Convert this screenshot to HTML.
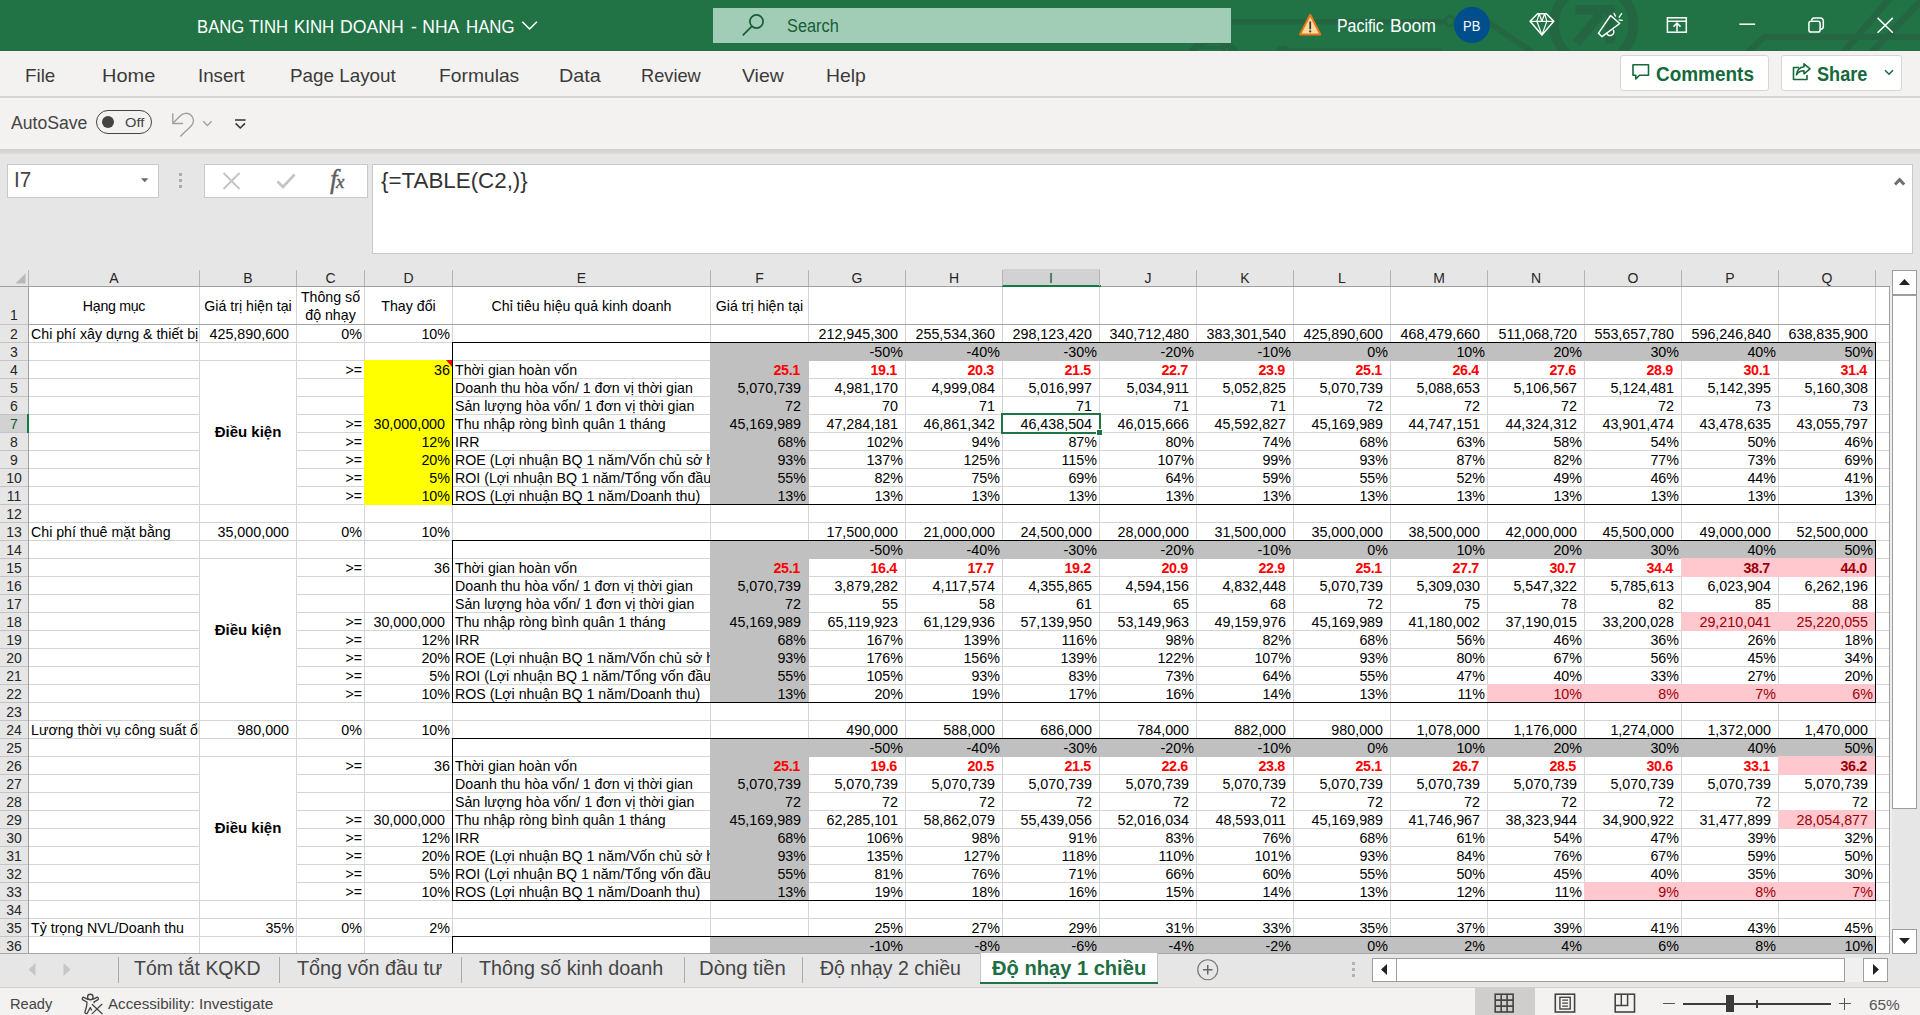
<!DOCTYPE html>
<html lang="vi"><head><meta charset="utf-8"><title>BANG TINH KINH DOANH - NHA HANG - Excel</title>
<style>
html,body{margin:0;padding:0}
body{width:1920px;height:1015px;overflow:hidden;position:relative;background:#e6e6e6;font-family:"Liberation Sans",sans-serif}
#app{position:absolute;left:0;top:0;width:1920px;height:1015px;overflow:hidden}
#app div,#app svg{position:absolute;box-sizing:content-box}
#app span{position:static}
.t{white-space:nowrap;transform-origin:0 0}
.c{font-size:14.2px;line-height:18px;color:#000;white-space:nowrap;overflow:hidden;box-sizing:border-box !important}
.h{font-size:14px}
</style></head>
<body><div id="app">
<div style="left:0px;top:0px;width:1920px;height:51px;background:#217346;"></div>
<svg style="left:1180px;top:0" width="740" height="51" viewBox="1180 0 740 51" fill="none" stroke="#236641" stroke-linecap="butt">
<circle cx="1213.5" cy="66" r="26" stroke-width="7"/>
<path d="M1199 47.5h25v6" stroke-width="3"/>
<circle cx="1593.7" cy="24.6" r="39.7" stroke-width="9.5"/>
<path d="M1575.6 9.7H1610.5V43.5" stroke-width="9.4"/>
<path d="M1601 13.5L1576.5 43" stroke-width="9"/>
<path d="M1232 21.8H1444" stroke-width="5.5"/>
<circle cx="1450" cy="21.2" r="4.7" stroke-width="3.2"/>
<path d="M1488 22l44 30" stroke-width="5.5"/>
<path d="M1290 50h152" stroke-width="3"/>
<circle cx="1283" cy="53" r="5.3" stroke-width="4.5"/>
<path d="M1746 54l18.5-17H1920" stroke-width="5.8"/>
<path d="M1842 54L1891-3" stroke-width="6.5"/>
<path d="M1870 54L1921 1" stroke-width="6.5"/>
</svg>
<div class="t " style="left:197.10px;top:19.29px;font-size:17.5px;line-height:17.5px;color:#fff;transform:scaleX(0.9534);">BANG</div>
<div class="t " style="left:248.80px;top:19.29px;font-size:17.5px;line-height:17.5px;color:#fff;transform:scaleX(0.9569);">TINH</div>
<div class="t " style="left:293.80px;top:19.29px;font-size:17.5px;line-height:17.5px;color:#fff;transform:scaleX(0.9611);">KINH</div>
<div class="t " style="left:340.10px;top:19.29px;font-size:17.5px;line-height:17.5px;color:#fff;transform:scaleX(1.0083);">DOANH</div>
<div class="t " style="left:410.50px;top:19.29px;font-size:17.5px;line-height:17.5px;color:#fff;transform:scaleX(0.9893);">-</div>
<div class="t " style="left:422.30px;top:19.29px;font-size:17.5px;line-height:17.5px;color:#fff;">NHA</div>
<div class="t " style="left:465.80px;top:19.29px;font-size:17.5px;line-height:17.5px;color:#fff;transform:scaleX(0.9609);">HANG</div>
<svg style="left:520px;top:19px" width="19" height="12" viewBox="520 19 19 12" fill="none" stroke="#fff" stroke-width="1.6"><path d="M522.3 21.8l7.3 7.2 7.3-7.2"/></svg>
<div style="left:713px;top:8px;width:518px;height:35px;background:#a1cdb6;"></div>
<svg style="left:741px;top:13px" width="25" height="24" viewBox="0 0 25 24" fill="none" stroke="#185c37" stroke-width="1.7"><circle cx="15.5" cy="8.5" r="6.6"/><path d="M10.8 13.3L1.8 22.3"/></svg>
<div class="t " style="left:786.70px;top:18.19px;font-size:17.5px;line-height:17.5px;color:#185c37;transform:scaleX(0.9338);">Search</div>
<svg style="left:1297px;top:11px" width="27" height="26" viewBox="1297 11 27 26"><path d="M1310.2 14.8L1320.3 34.4H1300.1z" fill="#fbdc9c" stroke="#e8771c" stroke-width="2" stroke-linejoin="round"/><path d="M1310.2 21.5v7.8" stroke="#3a3a3a" stroke-width="1.8"/><circle cx="1310.2" cy="31.4" r="1.1" fill="#3a3a3a"/></svg>
<div class="t " style="left:1337.10px;top:17.59px;font-size:17.5px;line-height:17.5px;color:#fff;transform:scaleX(0.9081);">Pacific</div>
<div class="t " style="left:1390.40px;top:17.59px;font-size:17.5px;line-height:17.5px;color:#fff;transform:scaleX(1.0071);">Boom</div>
<div style="left:1454px;top:7px;width:36px;height:36px;border-radius:50%;background:#004e8c"></div>
<div class="t " style="left:1463.20px;top:18.15px;font-size:15.3px;line-height:15.3px;color:#fff;transform:scaleX(0.8470);">PB</div>
<svg style="left:1528px;top:11px" width="28" height="26" viewBox="1528 11 28 26" fill="none" stroke="#fff" stroke-width="1.5" stroke-linejoin="round"><path d="M1537.5 13.7h8.9l7.4 7.6-11.9 13.6-11.8-13.6z"/><path d="M1530.1 21.3h23.7M1539.2 13.7l-2.3 7.6 5 13.6 5-13.6-2.3-7.6M1539.2 13.7l2.7 7.6 2.7-7.6" stroke-width="1.2"/></svg>
<svg style="left:1595px;top:10px" width="30" height="30" viewBox="1595 10 30 30" fill="none" stroke="#fff" stroke-width="1.5" stroke-linejoin="round" stroke-linecap="round"><path d="M1598.5 33.2L1610.6 15.5 1619.7 23.5 1602 36.7z"/><path d="M1606.8 33.6a3.5 3.5 0 0 0 6.6-3.4"/><path d="M1614 13.4l1.4 2.7M1621.6 13.6l-2.4 3.6M1622.2 20.4l-2.9-.6" stroke-width="1.3"/></svg>
<svg style="left:1664px;top:15px" width="26" height="20" viewBox="1664 15 26 20" fill="none" stroke="#fff" stroke-width="1.5"><rect x="1667.4" y="17.8" width="18.9" height="14.4"/><path d="M1667.4 21.3h18.9M1677 31.5v-8M1673.5 26.6l3.5-3.5 3.5 3.5"/></svg>
<svg style="left:1737px;top:22px" width="20" height="5" viewBox="1737 22 20 5" fill="none" stroke="#fff" stroke-width="1.5"><path d="M1739.3 24.2h15.8"/></svg>
<svg style="left:1805px;top:15px" width="22" height="20" viewBox="1805 15 22 20" fill="none" stroke="#fff" stroke-width="1.5"><rect x="1808.9" y="21.3" width="11.2" height="10.8" rx="2.2"/><path d="M1811.7 20.8v-.3a2.6 2.6 0 0 1 2.6-2.6h6a3 3 0 0 1 3 3v5.7a2.6 2.6 0 0 1-2.6 2.6h-.3"/></svg>
<svg style="left:1875px;top:15px" width="20" height="20" viewBox="1875 15 20 20" fill="none" stroke="#fff" stroke-width="1.5"><path d="M1877.6 17.9l15.2 14.8M1892.8 17.9l-15.2 14.8"/></svg>
<div style="left:0px;top:51px;width:1920px;height:46px;background:#f3f2f1;"></div>
<div style="left:0px;top:96px;width:1920px;height:2px;background:#d6d4d2;"></div>
<div class="t " style="left:24.70px;top:66.12px;font-size:19px;line-height:19px;color:#3b3a39;transform:scaleX(0.9905);">File</div>
<div class="t " style="left:101.70px;top:66.12px;font-size:19px;line-height:19px;color:#3b3a39;transform:scaleX(1.0507);">Home</div>
<div class="t " style="left:198.20px;top:66.12px;font-size:19px;line-height:19px;color:#3b3a39;transform:scaleX(0.9853);">Insert</div>
<div class="t " style="left:289.70px;top:66.12px;font-size:19px;line-height:19px;color:#3b3a39;transform:scaleX(0.9917);">Page Layout</div>
<div class="t " style="left:438.70px;top:66.12px;font-size:19px;line-height:19px;color:#3b3a39;transform:scaleX(1.0135);">Formulas</div>
<div class="t " style="left:559.20px;top:66.12px;font-size:19px;line-height:19px;color:#3b3a39;transform:scaleX(1.0402);">Data</div>
<div class="t " style="left:641.20px;top:66.12px;font-size:19px;line-height:19px;color:#3b3a39;transform:scaleX(0.9596);">Review</div>
<div class="t " style="left:742.20px;top:66.12px;font-size:19px;line-height:19px;color:#3b3a39;transform:scaleX(1.0233);">View</div>
<div class="t " style="left:826.20px;top:66.12px;font-size:19px;line-height:19px;color:#3b3a39;transform:scaleX(1.0193);">Help</div>
<div style="left:1620px;top:55px;width:147px;height:34px;background:#fff;border:1px solid #d8d6d4;border-radius:3px"></div>
<div style="left:1781px;top:55px;width:119px;height:34px;background:#fff;border:1px solid #d8d6d4;border-radius:3px"></div>
<svg style="left:1631px;top:63px" width="20" height="19" viewBox="0 0 20 19" fill="none" stroke="#15693b" stroke-width="1.6" stroke-linejoin="round"><path d="M2 1.8h15.5v10.5H8.5L4.8 16v-3.7H2z"/></svg>
<div class="t " style="left:1656.20px;top:65.21px;font-size:19.6px;line-height:19.6px;color:#15693b;font-weight:bold;transform:scaleX(0.9671);">Comments</div>
<svg style="left:1791px;top:62px" width="21" height="20" viewBox="0 0 21 20" fill="none" stroke="#15693b" stroke-width="1.6" stroke-linejoin="round"><path d="M8 5.5H2.5v12h13.5v-4.5"/><path d="M13 1.8l6 5-6 5v-3c-4 0-6 1.5-7.5 4 .5-5 3-7.5 7.5-8z"/></svg>
<div class="t " style="left:1816.60px;top:65.21px;font-size:19.6px;line-height:19.6px;color:#15693b;font-weight:bold;transform:scaleX(0.9250);">Share</div>
<svg style="left:1884px;top:69px" width="10" height="7" viewBox="0 0 10 7" fill="none" stroke="#15693b" stroke-width="1.5"><path d="M1 1.2l4 4 4-4"/></svg>
<div style="left:0px;top:98px;width:1920px;height:51px;background:#f3f2f1;"></div>
<div style="left:0;top:149px;width:1920px;height:7px;background:linear-gradient(#cdcdcd,#e6e6e6)"></div>
<div class="t " style="left:10.70px;top:113.56px;font-size:18px;line-height:18px;color:#444;transform:scaleX(0.9778);">AutoSave</div>
<div style="left:96px;top:110px;width:54.4px;height:21.6px;border:1.3px solid #444;border-radius:13px"></div>
<div style="left:102px;top:116px;width:12px;height:12px;border-radius:50%;background:#444"></div>
<div class="t " style="left:124.60px;top:116.29px;font-size:13.6px;line-height:13.6px;color:#444;transform:scaleX(1.0807);">Off</div>
<svg style="left:170px;top:110px" width="26" height="28" viewBox="170 110 26 28" fill="none" stroke="#a19f9d" stroke-width="1.4" stroke-linecap="butt" stroke-linejoin="miter"><path d="M172.8 113.2v10.3h10.3"/><path d="M173.2 123.1l6.3-6.6c3.3-3.6 8.3-4.3 11.6-1.3 3 2.8 3.2 7.4.3 10.5L180.3 136.4"/></svg>
<svg style="left:202px;top:120px" width="11" height="7" viewBox="202 120 11 7" fill="none" stroke="#a19f9d" stroke-width="1.3"><path d="M203.2 121.3l4.2 4.2 4.2-4.2"/></svg>
<svg style="left:234px;top:118px" width="13" height="12" viewBox="234 118 13 12" fill="none" stroke="#333" stroke-width="1.5"><path d="M235 120h10.6M235.6 123.4l4.7 4.6 4.7-4.6"/></svg>
<div style="left:0px;top:154px;width:1920px;height:115px;background:#e6e6e6;"></div>
<div style="left:7px;top:164px;width:150px;height:32px;background:#fff;border:1px solid #c8c8c8"></div>
<div class="t " style="left:14.00px;top:169.15px;font-size:21.8px;line-height:21.8px;color:#444;transform:scaleX(0.9449);">I7</div>
<svg style="left:141px;top:178px" width="8" height="5" viewBox="0 0 8 5"><path d="M0 0.3h7.4L3.7 4.2z" fill="#6a6a6a"/></svg>
<div style="left:179px;top:173px;width:3px;height:3px;background:#ababab;"></div>
<div style="left:179px;top:179px;width:3px;height:3px;background:#ababab;"></div>
<div style="left:179px;top:185px;width:3px;height:3px;background:#ababab;"></div>
<div style="left:204px;top:164px;width:162px;height:32px;background:#fff;border:1px solid #c8c8c8"></div>
<svg style="left:222px;top:172px" width="20" height="18" viewBox="0 0 20 18" fill="none" stroke="#c3c3c3" stroke-width="1.8"><path d="M1.5 1l16 16M17.5 1l-16 16"/></svg>
<svg style="left:276px;top:173px" width="20" height="16" viewBox="0 0 20 16" fill="none" stroke="#c3c3c3" stroke-width="2.6"><path d="M1.5 8.5l5.5 5.5L18.5 1.5"/></svg>
<div class="t" style="left:330px;top:166px;font-size:27px;line-height:27px;color:#5e5e5e;font-family:'Liberation Serif',serif;font-style:italic;letter-spacing:-1.5px;-webkit-text-stroke:0.4px #5e5e5e">f<span style="font-size:19px">x</span></div>
<div style="left:372px;top:164px;width:1539px;height:88px;background:#fff;border:1px solid #c8c8c8"></div>
<div class="t " style="left:381.20px;top:170.18px;font-size:22px;line-height:22px;color:#333;transform:scaleX(1.0156);">{=TABLE(C2,)}</div>
<svg style="left:1892px;top:175px" width="15" height="12" viewBox="1892 175 15 12" fill="none" stroke="#6e6e6e" stroke-width="3"><path d="M1895 184.5l4.6-4.8 4.6 4.8"/></svg>
<div style="left:0px;top:269px;width:1890px;height:685px;background:#fff;"></div>
<div style="left:0px;top:269px;width:1890px;height:17px;background:#e6e6e6;"></div>
<div style="left:0px;top:269px;width:28px;height:684px;background:#e6e6e6;"></div>
<div style="left:199px;top:287px;width:1px;height:666px;background:#d4d4d4;"></div>
<div style="left:296px;top:287px;width:1px;height:666px;background:#d4d4d4;"></div>
<div style="left:364px;top:287px;width:1px;height:666px;background:#d4d4d4;"></div>
<div style="left:452px;top:287px;width:1px;height:666px;background:#d4d4d4;"></div>
<div style="left:710px;top:287px;width:1px;height:666px;background:#d4d4d4;"></div>
<div style="left:808px;top:287px;width:1px;height:666px;background:#d4d4d4;"></div>
<div style="left:905px;top:287px;width:1px;height:666px;background:#d4d4d4;"></div>
<div style="left:1002px;top:287px;width:1px;height:666px;background:#d4d4d4;"></div>
<div style="left:1099px;top:287px;width:1px;height:666px;background:#d4d4d4;"></div>
<div style="left:1196px;top:287px;width:1px;height:666px;background:#d4d4d4;"></div>
<div style="left:1293px;top:287px;width:1px;height:666px;background:#d4d4d4;"></div>
<div style="left:1390px;top:287px;width:1px;height:666px;background:#d4d4d4;"></div>
<div style="left:1487px;top:287px;width:1px;height:666px;background:#d4d4d4;"></div>
<div style="left:1584px;top:287px;width:1px;height:666px;background:#d4d4d4;"></div>
<div style="left:1681px;top:287px;width:1px;height:666px;background:#d4d4d4;"></div>
<div style="left:1778px;top:287px;width:1px;height:666px;background:#d4d4d4;"></div>
<div style="left:1875px;top:287px;width:1px;height:666px;background:#d4d4d4;"></div>
<div style="left:29px;top:324px;width:1860px;height:1px;background:#a3a3a3;"></div>
<div style="left:29px;top:342px;width:1860px;height:1px;background:#d4d4d4;"></div>
<div style="left:29px;top:360px;width:1860px;height:1px;background:#d4d4d4;"></div>
<div style="left:29px;top:378px;width:1860px;height:1px;background:#d4d4d4;"></div>
<div style="left:29px;top:396px;width:1860px;height:1px;background:#d4d4d4;"></div>
<div style="left:29px;top:414px;width:1860px;height:1px;background:#d4d4d4;"></div>
<div style="left:29px;top:432px;width:1860px;height:1px;background:#d4d4d4;"></div>
<div style="left:29px;top:450px;width:1860px;height:1px;background:#d4d4d4;"></div>
<div style="left:29px;top:468px;width:1860px;height:1px;background:#d4d4d4;"></div>
<div style="left:29px;top:486px;width:1860px;height:1px;background:#d4d4d4;"></div>
<div style="left:29px;top:504px;width:1860px;height:1px;background:#d4d4d4;"></div>
<div style="left:29px;top:522px;width:1860px;height:1px;background:#d4d4d4;"></div>
<div style="left:29px;top:540px;width:1860px;height:1px;background:#d4d4d4;"></div>
<div style="left:29px;top:558px;width:1860px;height:1px;background:#d4d4d4;"></div>
<div style="left:29px;top:576px;width:1860px;height:1px;background:#d4d4d4;"></div>
<div style="left:29px;top:594px;width:1860px;height:1px;background:#d4d4d4;"></div>
<div style="left:29px;top:612px;width:1860px;height:1px;background:#d4d4d4;"></div>
<div style="left:29px;top:630px;width:1860px;height:1px;background:#d4d4d4;"></div>
<div style="left:29px;top:648px;width:1860px;height:1px;background:#d4d4d4;"></div>
<div style="left:29px;top:666px;width:1860px;height:1px;background:#d4d4d4;"></div>
<div style="left:29px;top:684px;width:1860px;height:1px;background:#d4d4d4;"></div>
<div style="left:29px;top:702px;width:1860px;height:1px;background:#d4d4d4;"></div>
<div style="left:29px;top:720px;width:1860px;height:1px;background:#d4d4d4;"></div>
<div style="left:29px;top:738px;width:1860px;height:1px;background:#d4d4d4;"></div>
<div style="left:29px;top:756px;width:1860px;height:1px;background:#d4d4d4;"></div>
<div style="left:29px;top:774px;width:1860px;height:1px;background:#d4d4d4;"></div>
<div style="left:29px;top:792px;width:1860px;height:1px;background:#d4d4d4;"></div>
<div style="left:29px;top:810px;width:1860px;height:1px;background:#d4d4d4;"></div>
<div style="left:29px;top:828px;width:1860px;height:1px;background:#d4d4d4;"></div>
<div style="left:29px;top:846px;width:1860px;height:1px;background:#d4d4d4;"></div>
<div style="left:29px;top:864px;width:1860px;height:1px;background:#d4d4d4;"></div>
<div style="left:29px;top:882px;width:1860px;height:1px;background:#d4d4d4;"></div>
<div style="left:29px;top:900px;width:1860px;height:1px;background:#d4d4d4;"></div>
<div style="left:29px;top:918px;width:1860px;height:1px;background:#d4d4d4;"></div>
<div style="left:29px;top:936px;width:1860px;height:1px;background:#d4d4d4;"></div>
<div style="left:200px;top:361px;width:96px;height:143px;background:#fff;"></div>
<div style="left:364px;top:360px;width:89px;height:145px;background:#ffff00;"></div>
<div style="left:710px;top:342px;width:1166px;height:19px;background:#c0c0c0;"></div>
<div style="left:710px;top:360px;width:99px;height:145px;background:#c0c0c0;"></div>
<div style="left:200px;top:559px;width:96px;height:143px;background:#fff;"></div>
<div style="left:710px;top:540px;width:1166px;height:19px;background:#c0c0c0;"></div>
<div style="left:710px;top:558px;width:99px;height:145px;background:#c0c0c0;"></div>
<div style="left:1681px;top:558px;width:98px;height:19px;background:#ffc7ce;"></div>
<div style="left:1778px;top:558px;width:98px;height:19px;background:#ffc7ce;"></div>
<div style="left:1681px;top:612px;width:98px;height:19px;background:#ffc7ce;"></div>
<div style="left:1778px;top:612px;width:98px;height:19px;background:#ffc7ce;"></div>
<div style="left:1487px;top:684px;width:98px;height:19px;background:#ffc7ce;"></div>
<div style="left:1584px;top:684px;width:98px;height:19px;background:#ffc7ce;"></div>
<div style="left:1681px;top:684px;width:98px;height:19px;background:#ffc7ce;"></div>
<div style="left:1778px;top:684px;width:98px;height:19px;background:#ffc7ce;"></div>
<div style="left:200px;top:757px;width:96px;height:143px;background:#fff;"></div>
<div style="left:710px;top:738px;width:1166px;height:19px;background:#c0c0c0;"></div>
<div style="left:710px;top:756px;width:99px;height:145px;background:#c0c0c0;"></div>
<div style="left:1778px;top:756px;width:98px;height:19px;background:#ffc7ce;"></div>
<div style="left:1778px;top:810px;width:98px;height:19px;background:#ffc7ce;"></div>
<div style="left:1584px;top:882px;width:98px;height:19px;background:#ffc7ce;"></div>
<div style="left:1681px;top:882px;width:98px;height:19px;background:#ffc7ce;"></div>
<div style="left:1778px;top:882px;width:98px;height:19px;background:#ffc7ce;"></div>
<div style="left:710px;top:936px;width:1166px;height:17px;background:#c0c0c0;"></div>
<div style="left:452px;top:342px;width:1422px;height:161px;border:1px solid #000"></div>
<div style="left:452px;top:540px;width:1422px;height:161px;border:1px solid #000"></div>
<div style="left:452px;top:738px;width:1422px;height:161px;border:1px solid #000"></div>
<div style="left:452px;top:936px;width:1422px;height:17px;border:1px solid #000;border-bottom:none"></div>
<svg style="left:446px;top:360px" width="6" height="7" viewBox="0 0 6 7"><path d="M0 0h6v7z" fill="#ff0000"/></svg>
<div class="c" style="left:29px;top:287px;width:170px;height:37px;line-height:38px;text-align:center;letter-spacing:-0.3px">Hạng mục</div>
<div class="c" style="left:200px;top:287px;width:96px;height:37px;line-height:38px;text-align:center;letter-spacing:0px">Giá trị hiện tại</div>
<div class="c" style="left:297px;top:289px;width:67px;height:36px;line-height:17.6px;text-align:center;white-space:normal">Thông số<br>độ nhạy</div>
<div class="c" style="left:365px;top:287px;width:87px;height:37px;line-height:38px;text-align:center;letter-spacing:0px">Thay đổi</div>
<div class="c" style="left:453px;top:287px;width:257px;height:37px;line-height:38px;text-align:center;letter-spacing:0px">Chỉ tiêu hiệu quả kinh doanh</div>
<div class="c" style="left:711px;top:287px;width:97px;height:37px;line-height:38px;text-align:center;letter-spacing:0px">Giá trị hiện tại</div>
<div class="c" style="left:29px;top:325px;width:170px;height:18px;padding-left:2px;">Chi phí xây dựng &amp; thiết bị</div>
<div class="c" style="left:200px;top:325px;width:96px;height:18px;text-align:right;padding-right:7px;font-size:14.3px;">425,890,600</div>
<div class="c" style="left:297px;top:325px;width:67px;height:18px;text-align:right;padding-right:2px;font-size:14.3px;">0%</div>
<div class="c" style="left:365px;top:325px;width:87px;height:18px;text-align:right;padding-right:2px;font-size:14.3px;">10%</div>
<div class="c" style="left:809px;top:325px;width:96px;height:18px;text-align:right;padding-right:7px;font-size:14.3px;">212,945,300</div>
<div class="c" style="left:906px;top:325px;width:96px;height:18px;text-align:right;padding-right:7px;font-size:14.3px;">255,534,360</div>
<div class="c" style="left:1003px;top:325px;width:96px;height:18px;text-align:right;padding-right:7px;font-size:14.3px;">298,123,420</div>
<div class="c" style="left:1100px;top:325px;width:96px;height:18px;text-align:right;padding-right:7px;font-size:14.3px;">340,712,480</div>
<div class="c" style="left:1197px;top:325px;width:96px;height:18px;text-align:right;padding-right:7px;font-size:14.3px;">383,301,540</div>
<div class="c" style="left:1294px;top:325px;width:96px;height:18px;text-align:right;padding-right:7px;font-size:14.3px;">425,890,600</div>
<div class="c" style="left:1391px;top:325px;width:96px;height:18px;text-align:right;padding-right:7px;font-size:14.3px;">468,479,660</div>
<div class="c" style="left:1488px;top:325px;width:96px;height:18px;text-align:right;padding-right:7px;font-size:14.3px;">511,068,720</div>
<div class="c" style="left:1585px;top:325px;width:96px;height:18px;text-align:right;padding-right:7px;font-size:14.3px;">553,657,780</div>
<div class="c" style="left:1682px;top:325px;width:96px;height:18px;text-align:right;padding-right:7px;font-size:14.3px;">596,246,840</div>
<div class="c" style="left:1779px;top:325px;width:96px;height:18px;text-align:right;padding-right:7px;font-size:14.3px;">638,835,900</div>
<div class="c" style="left:809px;top:343px;width:96px;height:18px;text-align:right;padding-right:2px;font-size:14.3px;">-50%</div>
<div class="c" style="left:906px;top:343px;width:96px;height:18px;text-align:right;padding-right:2px;font-size:14.3px;">-40%</div>
<div class="c" style="left:1003px;top:343px;width:96px;height:18px;text-align:right;padding-right:2px;font-size:14.3px;">-30%</div>
<div class="c" style="left:1100px;top:343px;width:96px;height:18px;text-align:right;padding-right:2px;font-size:14.3px;">-20%</div>
<div class="c" style="left:1197px;top:343px;width:96px;height:18px;text-align:right;padding-right:2px;font-size:14.3px;">-10%</div>
<div class="c" style="left:1294px;top:343px;width:96px;height:18px;text-align:right;padding-right:2px;font-size:14.3px;">0%</div>
<div class="c" style="left:1391px;top:343px;width:96px;height:18px;text-align:right;padding-right:2px;font-size:14.3px;">10%</div>
<div class="c" style="left:1488px;top:343px;width:96px;height:18px;text-align:right;padding-right:2px;font-size:14.3px;">20%</div>
<div class="c" style="left:1585px;top:343px;width:96px;height:18px;text-align:right;padding-right:2px;font-size:14.3px;">30%</div>
<div class="c" style="left:1682px;top:343px;width:96px;height:18px;text-align:right;padding-right:2px;font-size:14.3px;">40%</div>
<div class="c" style="left:1779px;top:343px;width:96px;height:18px;text-align:right;padding-right:2px;font-size:14.3px;">50%</div>
<div class="c" style="left:200px;top:361px;width:96px;height:143px;line-height:141px;text-align:center;font-weight:bold;font-size:15px">Điều kiện</div>
<div class="c" style="left:297px;top:361px;width:67px;height:18px;text-align:right;padding-right:2px;">&gt;=</div>
<div class="c" style="left:365px;top:361px;width:87px;height:18px;text-align:right;padding-right:2px;font-size:14.3px;">36</div>
<div class="c" style="left:453px;top:361px;width:257px;height:18px;padding-left:2px;">Thời gian hoàn vốn</div>
<div class="c" style="left:711px;top:361px;width:97px;height:18px;text-align:right;padding-right:8px;color:#ff0000;font-weight:bold;font-size:14.3px;letter-spacing:-0.33px;">25.1</div>
<div class="c" style="left:809px;top:361px;width:96px;height:18px;text-align:right;padding-right:8px;color:#ff0000;font-weight:bold;font-size:14.3px;letter-spacing:-0.33px;">19.1</div>
<div class="c" style="left:906px;top:361px;width:96px;height:18px;text-align:right;padding-right:8px;color:#ff0000;font-weight:bold;font-size:14.3px;letter-spacing:-0.33px;">20.3</div>
<div class="c" style="left:1003px;top:361px;width:96px;height:18px;text-align:right;padding-right:8px;color:#ff0000;font-weight:bold;font-size:14.3px;letter-spacing:-0.33px;">21.5</div>
<div class="c" style="left:1100px;top:361px;width:96px;height:18px;text-align:right;padding-right:8px;color:#ff0000;font-weight:bold;font-size:14.3px;letter-spacing:-0.33px;">22.7</div>
<div class="c" style="left:1197px;top:361px;width:96px;height:18px;text-align:right;padding-right:8px;color:#ff0000;font-weight:bold;font-size:14.3px;letter-spacing:-0.33px;">23.9</div>
<div class="c" style="left:1294px;top:361px;width:96px;height:18px;text-align:right;padding-right:8px;color:#ff0000;font-weight:bold;font-size:14.3px;letter-spacing:-0.33px;">25.1</div>
<div class="c" style="left:1391px;top:361px;width:96px;height:18px;text-align:right;padding-right:8px;color:#ff0000;font-weight:bold;font-size:14.3px;letter-spacing:-0.33px;">26.4</div>
<div class="c" style="left:1488px;top:361px;width:96px;height:18px;text-align:right;padding-right:8px;color:#ff0000;font-weight:bold;font-size:14.3px;letter-spacing:-0.33px;">27.6</div>
<div class="c" style="left:1585px;top:361px;width:96px;height:18px;text-align:right;padding-right:8px;color:#ff0000;font-weight:bold;font-size:14.3px;letter-spacing:-0.33px;">28.9</div>
<div class="c" style="left:1682px;top:361px;width:96px;height:18px;text-align:right;padding-right:8px;color:#ff0000;font-weight:bold;font-size:14.3px;letter-spacing:-0.33px;">30.1</div>
<div class="c" style="left:1779px;top:361px;width:96px;height:18px;text-align:right;padding-right:8px;color:#ff0000;font-weight:bold;font-size:14.3px;letter-spacing:-0.33px;">31.4</div>
<div class="c" style="left:453px;top:379px;width:257px;height:18px;padding-left:2px;">Doanh thu hòa vốn/ 1 đơn vị thời gian</div>
<div class="c" style="left:711px;top:379px;width:97px;height:18px;text-align:right;padding-right:7px;font-size:14.3px;">5,070,739</div>
<div class="c" style="left:809px;top:379px;width:96px;height:18px;text-align:right;padding-right:7px;font-size:14.3px;">4,981,170</div>
<div class="c" style="left:906px;top:379px;width:96px;height:18px;text-align:right;padding-right:7px;font-size:14.3px;">4,999,084</div>
<div class="c" style="left:1003px;top:379px;width:96px;height:18px;text-align:right;padding-right:7px;font-size:14.3px;">5,016,997</div>
<div class="c" style="left:1100px;top:379px;width:96px;height:18px;text-align:right;padding-right:7px;font-size:14.3px;">5,034,911</div>
<div class="c" style="left:1197px;top:379px;width:96px;height:18px;text-align:right;padding-right:7px;font-size:14.3px;">5,052,825</div>
<div class="c" style="left:1294px;top:379px;width:96px;height:18px;text-align:right;padding-right:7px;font-size:14.3px;">5,070,739</div>
<div class="c" style="left:1391px;top:379px;width:96px;height:18px;text-align:right;padding-right:7px;font-size:14.3px;">5,088,653</div>
<div class="c" style="left:1488px;top:379px;width:96px;height:18px;text-align:right;padding-right:7px;font-size:14.3px;">5,106,567</div>
<div class="c" style="left:1585px;top:379px;width:96px;height:18px;text-align:right;padding-right:7px;font-size:14.3px;">5,124,481</div>
<div class="c" style="left:1682px;top:379px;width:96px;height:18px;text-align:right;padding-right:7px;font-size:14.3px;">5,142,395</div>
<div class="c" style="left:1779px;top:379px;width:96px;height:18px;text-align:right;padding-right:7px;font-size:14.3px;">5,160,308</div>
<div class="c" style="left:453px;top:397px;width:257px;height:18px;padding-left:2px;">Sản lượng hòa vốn/ 1 đơn vị thời gian</div>
<div class="c" style="left:711px;top:397px;width:97px;height:18px;text-align:right;padding-right:7px;font-size:14.3px;">72</div>
<div class="c" style="left:809px;top:397px;width:96px;height:18px;text-align:right;padding-right:7px;font-size:14.3px;">70</div>
<div class="c" style="left:906px;top:397px;width:96px;height:18px;text-align:right;padding-right:7px;font-size:14.3px;">71</div>
<div class="c" style="left:1003px;top:397px;width:96px;height:18px;text-align:right;padding-right:7px;font-size:14.3px;">71</div>
<div class="c" style="left:1100px;top:397px;width:96px;height:18px;text-align:right;padding-right:7px;font-size:14.3px;">71</div>
<div class="c" style="left:1197px;top:397px;width:96px;height:18px;text-align:right;padding-right:7px;font-size:14.3px;">71</div>
<div class="c" style="left:1294px;top:397px;width:96px;height:18px;text-align:right;padding-right:7px;font-size:14.3px;">72</div>
<div class="c" style="left:1391px;top:397px;width:96px;height:18px;text-align:right;padding-right:7px;font-size:14.3px;">72</div>
<div class="c" style="left:1488px;top:397px;width:96px;height:18px;text-align:right;padding-right:7px;font-size:14.3px;">72</div>
<div class="c" style="left:1585px;top:397px;width:96px;height:18px;text-align:right;padding-right:7px;font-size:14.3px;">72</div>
<div class="c" style="left:1682px;top:397px;width:96px;height:18px;text-align:right;padding-right:7px;font-size:14.3px;">73</div>
<div class="c" style="left:1779px;top:397px;width:96px;height:18px;text-align:right;padding-right:7px;font-size:14.3px;">73</div>
<div class="c" style="left:297px;top:415px;width:67px;height:18px;text-align:right;padding-right:2px;">&gt;=</div>
<div class="c" style="left:365px;top:415px;width:87px;height:18px;text-align:right;padding-right:7px;font-size:14.3px;">30,000,000</div>
<div class="c" style="left:453px;top:415px;width:257px;height:18px;padding-left:2px;">Thu nhập ròng bình quân 1 tháng</div>
<div class="c" style="left:711px;top:415px;width:97px;height:18px;text-align:right;padding-right:7px;font-size:14.3px;">45,169,989</div>
<div class="c" style="left:809px;top:415px;width:96px;height:18px;text-align:right;padding-right:7px;font-size:14.3px;">47,284,181</div>
<div class="c" style="left:906px;top:415px;width:96px;height:18px;text-align:right;padding-right:7px;font-size:14.3px;">46,861,342</div>
<div class="c" style="left:1003px;top:415px;width:96px;height:18px;text-align:right;padding-right:7px;font-size:14.3px;">46,438,504</div>
<div class="c" style="left:1100px;top:415px;width:96px;height:18px;text-align:right;padding-right:7px;font-size:14.3px;">46,015,666</div>
<div class="c" style="left:1197px;top:415px;width:96px;height:18px;text-align:right;padding-right:7px;font-size:14.3px;">45,592,827</div>
<div class="c" style="left:1294px;top:415px;width:96px;height:18px;text-align:right;padding-right:7px;font-size:14.3px;">45,169,989</div>
<div class="c" style="left:1391px;top:415px;width:96px;height:18px;text-align:right;padding-right:7px;font-size:14.3px;">44,747,151</div>
<div class="c" style="left:1488px;top:415px;width:96px;height:18px;text-align:right;padding-right:7px;font-size:14.3px;">44,324,312</div>
<div class="c" style="left:1585px;top:415px;width:96px;height:18px;text-align:right;padding-right:7px;font-size:14.3px;">43,901,474</div>
<div class="c" style="left:1682px;top:415px;width:96px;height:18px;text-align:right;padding-right:7px;font-size:14.3px;">43,478,635</div>
<div class="c" style="left:1779px;top:415px;width:96px;height:18px;text-align:right;padding-right:7px;font-size:14.3px;">43,055,797</div>
<div class="c" style="left:297px;top:433px;width:67px;height:18px;text-align:right;padding-right:2px;">&gt;=</div>
<div class="c" style="left:365px;top:433px;width:87px;height:18px;text-align:right;padding-right:2px;font-size:14.3px;">12%</div>
<div class="c" style="left:453px;top:433px;width:257px;height:18px;padding-left:2px;">IRR</div>
<div class="c" style="left:711px;top:433px;width:97px;height:18px;text-align:right;padding-right:2px;font-size:14.3px;">68%</div>
<div class="c" style="left:809px;top:433px;width:96px;height:18px;text-align:right;padding-right:2px;font-size:14.3px;">102%</div>
<div class="c" style="left:906px;top:433px;width:96px;height:18px;text-align:right;padding-right:2px;font-size:14.3px;">94%</div>
<div class="c" style="left:1003px;top:433px;width:96px;height:18px;text-align:right;padding-right:2px;font-size:14.3px;">87%</div>
<div class="c" style="left:1100px;top:433px;width:96px;height:18px;text-align:right;padding-right:2px;font-size:14.3px;">80%</div>
<div class="c" style="left:1197px;top:433px;width:96px;height:18px;text-align:right;padding-right:2px;font-size:14.3px;">74%</div>
<div class="c" style="left:1294px;top:433px;width:96px;height:18px;text-align:right;padding-right:2px;font-size:14.3px;">68%</div>
<div class="c" style="left:1391px;top:433px;width:96px;height:18px;text-align:right;padding-right:2px;font-size:14.3px;">63%</div>
<div class="c" style="left:1488px;top:433px;width:96px;height:18px;text-align:right;padding-right:2px;font-size:14.3px;">58%</div>
<div class="c" style="left:1585px;top:433px;width:96px;height:18px;text-align:right;padding-right:2px;font-size:14.3px;">54%</div>
<div class="c" style="left:1682px;top:433px;width:96px;height:18px;text-align:right;padding-right:2px;font-size:14.3px;">50%</div>
<div class="c" style="left:1779px;top:433px;width:96px;height:18px;text-align:right;padding-right:2px;font-size:14.3px;">46%</div>
<div class="c" style="left:297px;top:451px;width:67px;height:18px;text-align:right;padding-right:2px;">&gt;=</div>
<div class="c" style="left:365px;top:451px;width:87px;height:18px;text-align:right;padding-right:2px;font-size:14.3px;">20%</div>
<div class="c" style="left:453px;top:451px;width:257px;height:18px;padding-left:2px;">ROE (Lợi nhuận BQ 1 năm/Vốn chủ sở hữu)</div>
<div class="c" style="left:711px;top:451px;width:97px;height:18px;text-align:right;padding-right:2px;font-size:14.3px;">93%</div>
<div class="c" style="left:809px;top:451px;width:96px;height:18px;text-align:right;padding-right:2px;font-size:14.3px;">137%</div>
<div class="c" style="left:906px;top:451px;width:96px;height:18px;text-align:right;padding-right:2px;font-size:14.3px;">125%</div>
<div class="c" style="left:1003px;top:451px;width:96px;height:18px;text-align:right;padding-right:2px;font-size:14.3px;">115%</div>
<div class="c" style="left:1100px;top:451px;width:96px;height:18px;text-align:right;padding-right:2px;font-size:14.3px;">107%</div>
<div class="c" style="left:1197px;top:451px;width:96px;height:18px;text-align:right;padding-right:2px;font-size:14.3px;">99%</div>
<div class="c" style="left:1294px;top:451px;width:96px;height:18px;text-align:right;padding-right:2px;font-size:14.3px;">93%</div>
<div class="c" style="left:1391px;top:451px;width:96px;height:18px;text-align:right;padding-right:2px;font-size:14.3px;">87%</div>
<div class="c" style="left:1488px;top:451px;width:96px;height:18px;text-align:right;padding-right:2px;font-size:14.3px;">82%</div>
<div class="c" style="left:1585px;top:451px;width:96px;height:18px;text-align:right;padding-right:2px;font-size:14.3px;">77%</div>
<div class="c" style="left:1682px;top:451px;width:96px;height:18px;text-align:right;padding-right:2px;font-size:14.3px;">73%</div>
<div class="c" style="left:1779px;top:451px;width:96px;height:18px;text-align:right;padding-right:2px;font-size:14.3px;">69%</div>
<div class="c" style="left:297px;top:469px;width:67px;height:18px;text-align:right;padding-right:2px;">&gt;=</div>
<div class="c" style="left:365px;top:469px;width:87px;height:18px;text-align:right;padding-right:2px;font-size:14.3px;">5%</div>
<div class="c" style="left:453px;top:469px;width:257px;height:18px;padding-left:2px;">ROI (Lợi nhuận BQ 1 năm/Tổng vốn đầu tư)</div>
<div class="c" style="left:711px;top:469px;width:97px;height:18px;text-align:right;padding-right:2px;font-size:14.3px;">55%</div>
<div class="c" style="left:809px;top:469px;width:96px;height:18px;text-align:right;padding-right:2px;font-size:14.3px;">82%</div>
<div class="c" style="left:906px;top:469px;width:96px;height:18px;text-align:right;padding-right:2px;font-size:14.3px;">75%</div>
<div class="c" style="left:1003px;top:469px;width:96px;height:18px;text-align:right;padding-right:2px;font-size:14.3px;">69%</div>
<div class="c" style="left:1100px;top:469px;width:96px;height:18px;text-align:right;padding-right:2px;font-size:14.3px;">64%</div>
<div class="c" style="left:1197px;top:469px;width:96px;height:18px;text-align:right;padding-right:2px;font-size:14.3px;">59%</div>
<div class="c" style="left:1294px;top:469px;width:96px;height:18px;text-align:right;padding-right:2px;font-size:14.3px;">55%</div>
<div class="c" style="left:1391px;top:469px;width:96px;height:18px;text-align:right;padding-right:2px;font-size:14.3px;">52%</div>
<div class="c" style="left:1488px;top:469px;width:96px;height:18px;text-align:right;padding-right:2px;font-size:14.3px;">49%</div>
<div class="c" style="left:1585px;top:469px;width:96px;height:18px;text-align:right;padding-right:2px;font-size:14.3px;">46%</div>
<div class="c" style="left:1682px;top:469px;width:96px;height:18px;text-align:right;padding-right:2px;font-size:14.3px;">44%</div>
<div class="c" style="left:1779px;top:469px;width:96px;height:18px;text-align:right;padding-right:2px;font-size:14.3px;">41%</div>
<div class="c" style="left:297px;top:487px;width:67px;height:18px;text-align:right;padding-right:2px;">&gt;=</div>
<div class="c" style="left:365px;top:487px;width:87px;height:18px;text-align:right;padding-right:2px;font-size:14.3px;">10%</div>
<div class="c" style="left:453px;top:487px;width:257px;height:18px;padding-left:2px;">ROS (Lợi nhuận BQ 1 năm/Doanh thu)</div>
<div class="c" style="left:711px;top:487px;width:97px;height:18px;text-align:right;padding-right:2px;font-size:14.3px;">13%</div>
<div class="c" style="left:809px;top:487px;width:96px;height:18px;text-align:right;padding-right:2px;font-size:14.3px;">13%</div>
<div class="c" style="left:906px;top:487px;width:96px;height:18px;text-align:right;padding-right:2px;font-size:14.3px;">13%</div>
<div class="c" style="left:1003px;top:487px;width:96px;height:18px;text-align:right;padding-right:2px;font-size:14.3px;">13%</div>
<div class="c" style="left:1100px;top:487px;width:96px;height:18px;text-align:right;padding-right:2px;font-size:14.3px;">13%</div>
<div class="c" style="left:1197px;top:487px;width:96px;height:18px;text-align:right;padding-right:2px;font-size:14.3px;">13%</div>
<div class="c" style="left:1294px;top:487px;width:96px;height:18px;text-align:right;padding-right:2px;font-size:14.3px;">13%</div>
<div class="c" style="left:1391px;top:487px;width:96px;height:18px;text-align:right;padding-right:2px;font-size:14.3px;">13%</div>
<div class="c" style="left:1488px;top:487px;width:96px;height:18px;text-align:right;padding-right:2px;font-size:14.3px;">13%</div>
<div class="c" style="left:1585px;top:487px;width:96px;height:18px;text-align:right;padding-right:2px;font-size:14.3px;">13%</div>
<div class="c" style="left:1682px;top:487px;width:96px;height:18px;text-align:right;padding-right:2px;font-size:14.3px;">13%</div>
<div class="c" style="left:1779px;top:487px;width:96px;height:18px;text-align:right;padding-right:2px;font-size:14.3px;">13%</div>
<div class="c" style="left:29px;top:523px;width:170px;height:18px;padding-left:2px;">Chi phí thuê mặt bằng</div>
<div class="c" style="left:200px;top:523px;width:96px;height:18px;text-align:right;padding-right:7px;font-size:14.3px;">35,000,000</div>
<div class="c" style="left:297px;top:523px;width:67px;height:18px;text-align:right;padding-right:2px;font-size:14.3px;">0%</div>
<div class="c" style="left:365px;top:523px;width:87px;height:18px;text-align:right;padding-right:2px;font-size:14.3px;">10%</div>
<div class="c" style="left:809px;top:523px;width:96px;height:18px;text-align:right;padding-right:7px;font-size:14.3px;">17,500,000</div>
<div class="c" style="left:906px;top:523px;width:96px;height:18px;text-align:right;padding-right:7px;font-size:14.3px;">21,000,000</div>
<div class="c" style="left:1003px;top:523px;width:96px;height:18px;text-align:right;padding-right:7px;font-size:14.3px;">24,500,000</div>
<div class="c" style="left:1100px;top:523px;width:96px;height:18px;text-align:right;padding-right:7px;font-size:14.3px;">28,000,000</div>
<div class="c" style="left:1197px;top:523px;width:96px;height:18px;text-align:right;padding-right:7px;font-size:14.3px;">31,500,000</div>
<div class="c" style="left:1294px;top:523px;width:96px;height:18px;text-align:right;padding-right:7px;font-size:14.3px;">35,000,000</div>
<div class="c" style="left:1391px;top:523px;width:96px;height:18px;text-align:right;padding-right:7px;font-size:14.3px;">38,500,000</div>
<div class="c" style="left:1488px;top:523px;width:96px;height:18px;text-align:right;padding-right:7px;font-size:14.3px;">42,000,000</div>
<div class="c" style="left:1585px;top:523px;width:96px;height:18px;text-align:right;padding-right:7px;font-size:14.3px;">45,500,000</div>
<div class="c" style="left:1682px;top:523px;width:96px;height:18px;text-align:right;padding-right:7px;font-size:14.3px;">49,000,000</div>
<div class="c" style="left:1779px;top:523px;width:96px;height:18px;text-align:right;padding-right:7px;font-size:14.3px;">52,500,000</div>
<div class="c" style="left:809px;top:541px;width:96px;height:18px;text-align:right;padding-right:2px;font-size:14.3px;">-50%</div>
<div class="c" style="left:906px;top:541px;width:96px;height:18px;text-align:right;padding-right:2px;font-size:14.3px;">-40%</div>
<div class="c" style="left:1003px;top:541px;width:96px;height:18px;text-align:right;padding-right:2px;font-size:14.3px;">-30%</div>
<div class="c" style="left:1100px;top:541px;width:96px;height:18px;text-align:right;padding-right:2px;font-size:14.3px;">-20%</div>
<div class="c" style="left:1197px;top:541px;width:96px;height:18px;text-align:right;padding-right:2px;font-size:14.3px;">-10%</div>
<div class="c" style="left:1294px;top:541px;width:96px;height:18px;text-align:right;padding-right:2px;font-size:14.3px;">0%</div>
<div class="c" style="left:1391px;top:541px;width:96px;height:18px;text-align:right;padding-right:2px;font-size:14.3px;">10%</div>
<div class="c" style="left:1488px;top:541px;width:96px;height:18px;text-align:right;padding-right:2px;font-size:14.3px;">20%</div>
<div class="c" style="left:1585px;top:541px;width:96px;height:18px;text-align:right;padding-right:2px;font-size:14.3px;">30%</div>
<div class="c" style="left:1682px;top:541px;width:96px;height:18px;text-align:right;padding-right:2px;font-size:14.3px;">40%</div>
<div class="c" style="left:1779px;top:541px;width:96px;height:18px;text-align:right;padding-right:2px;font-size:14.3px;">50%</div>
<div class="c" style="left:200px;top:559px;width:96px;height:143px;line-height:141px;text-align:center;font-weight:bold;font-size:15px">Điều kiện</div>
<div class="c" style="left:297px;top:559px;width:67px;height:18px;text-align:right;padding-right:2px;">&gt;=</div>
<div class="c" style="left:365px;top:559px;width:87px;height:18px;text-align:right;padding-right:2px;font-size:14.3px;">36</div>
<div class="c" style="left:453px;top:559px;width:257px;height:18px;padding-left:2px;">Thời gian hoàn vốn</div>
<div class="c" style="left:711px;top:559px;width:97px;height:18px;text-align:right;padding-right:8px;color:#ff0000;font-weight:bold;font-size:14.3px;letter-spacing:-0.33px;">25.1</div>
<div class="c" style="left:809px;top:559px;width:96px;height:18px;text-align:right;padding-right:8px;color:#ff0000;font-weight:bold;font-size:14.3px;letter-spacing:-0.33px;">16.4</div>
<div class="c" style="left:906px;top:559px;width:96px;height:18px;text-align:right;padding-right:8px;color:#ff0000;font-weight:bold;font-size:14.3px;letter-spacing:-0.33px;">17.7</div>
<div class="c" style="left:1003px;top:559px;width:96px;height:18px;text-align:right;padding-right:8px;color:#ff0000;font-weight:bold;font-size:14.3px;letter-spacing:-0.33px;">19.2</div>
<div class="c" style="left:1100px;top:559px;width:96px;height:18px;text-align:right;padding-right:8px;color:#ff0000;font-weight:bold;font-size:14.3px;letter-spacing:-0.33px;">20.9</div>
<div class="c" style="left:1197px;top:559px;width:96px;height:18px;text-align:right;padding-right:8px;color:#ff0000;font-weight:bold;font-size:14.3px;letter-spacing:-0.33px;">22.9</div>
<div class="c" style="left:1294px;top:559px;width:96px;height:18px;text-align:right;padding-right:8px;color:#ff0000;font-weight:bold;font-size:14.3px;letter-spacing:-0.33px;">25.1</div>
<div class="c" style="left:1391px;top:559px;width:96px;height:18px;text-align:right;padding-right:8px;color:#ff0000;font-weight:bold;font-size:14.3px;letter-spacing:-0.33px;">27.7</div>
<div class="c" style="left:1488px;top:559px;width:96px;height:18px;text-align:right;padding-right:8px;color:#ff0000;font-weight:bold;font-size:14.3px;letter-spacing:-0.33px;">30.7</div>
<div class="c" style="left:1585px;top:559px;width:96px;height:18px;text-align:right;padding-right:8px;color:#ff0000;font-weight:bold;font-size:14.3px;letter-spacing:-0.33px;">34.4</div>
<div class="c" style="left:1682px;top:559px;width:96px;height:18px;text-align:right;padding-right:8px;color:#9c0006;font-weight:bold;font-size:14.3px;letter-spacing:-0.33px;">38.7</div>
<div class="c" style="left:1779px;top:559px;width:96px;height:18px;text-align:right;padding-right:8px;color:#9c0006;font-weight:bold;font-size:14.3px;letter-spacing:-0.33px;">44.0</div>
<div class="c" style="left:453px;top:577px;width:257px;height:18px;padding-left:2px;">Doanh thu hòa vốn/ 1 đơn vị thời gian</div>
<div class="c" style="left:711px;top:577px;width:97px;height:18px;text-align:right;padding-right:7px;font-size:14.3px;">5,070,739</div>
<div class="c" style="left:809px;top:577px;width:96px;height:18px;text-align:right;padding-right:7px;font-size:14.3px;">3,879,282</div>
<div class="c" style="left:906px;top:577px;width:96px;height:18px;text-align:right;padding-right:7px;font-size:14.3px;">4,117,574</div>
<div class="c" style="left:1003px;top:577px;width:96px;height:18px;text-align:right;padding-right:7px;font-size:14.3px;">4,355,865</div>
<div class="c" style="left:1100px;top:577px;width:96px;height:18px;text-align:right;padding-right:7px;font-size:14.3px;">4,594,156</div>
<div class="c" style="left:1197px;top:577px;width:96px;height:18px;text-align:right;padding-right:7px;font-size:14.3px;">4,832,448</div>
<div class="c" style="left:1294px;top:577px;width:96px;height:18px;text-align:right;padding-right:7px;font-size:14.3px;">5,070,739</div>
<div class="c" style="left:1391px;top:577px;width:96px;height:18px;text-align:right;padding-right:7px;font-size:14.3px;">5,309,030</div>
<div class="c" style="left:1488px;top:577px;width:96px;height:18px;text-align:right;padding-right:7px;font-size:14.3px;">5,547,322</div>
<div class="c" style="left:1585px;top:577px;width:96px;height:18px;text-align:right;padding-right:7px;font-size:14.3px;">5,785,613</div>
<div class="c" style="left:1682px;top:577px;width:96px;height:18px;text-align:right;padding-right:7px;font-size:14.3px;">6,023,904</div>
<div class="c" style="left:1779px;top:577px;width:96px;height:18px;text-align:right;padding-right:7px;font-size:14.3px;">6,262,196</div>
<div class="c" style="left:453px;top:595px;width:257px;height:18px;padding-left:2px;">Sản lượng hòa vốn/ 1 đơn vị thời gian</div>
<div class="c" style="left:711px;top:595px;width:97px;height:18px;text-align:right;padding-right:7px;font-size:14.3px;">72</div>
<div class="c" style="left:809px;top:595px;width:96px;height:18px;text-align:right;padding-right:7px;font-size:14.3px;">55</div>
<div class="c" style="left:906px;top:595px;width:96px;height:18px;text-align:right;padding-right:7px;font-size:14.3px;">58</div>
<div class="c" style="left:1003px;top:595px;width:96px;height:18px;text-align:right;padding-right:7px;font-size:14.3px;">61</div>
<div class="c" style="left:1100px;top:595px;width:96px;height:18px;text-align:right;padding-right:7px;font-size:14.3px;">65</div>
<div class="c" style="left:1197px;top:595px;width:96px;height:18px;text-align:right;padding-right:7px;font-size:14.3px;">68</div>
<div class="c" style="left:1294px;top:595px;width:96px;height:18px;text-align:right;padding-right:7px;font-size:14.3px;">72</div>
<div class="c" style="left:1391px;top:595px;width:96px;height:18px;text-align:right;padding-right:7px;font-size:14.3px;">75</div>
<div class="c" style="left:1488px;top:595px;width:96px;height:18px;text-align:right;padding-right:7px;font-size:14.3px;">78</div>
<div class="c" style="left:1585px;top:595px;width:96px;height:18px;text-align:right;padding-right:7px;font-size:14.3px;">82</div>
<div class="c" style="left:1682px;top:595px;width:96px;height:18px;text-align:right;padding-right:7px;font-size:14.3px;">85</div>
<div class="c" style="left:1779px;top:595px;width:96px;height:18px;text-align:right;padding-right:7px;font-size:14.3px;">88</div>
<div class="c" style="left:297px;top:613px;width:67px;height:18px;text-align:right;padding-right:2px;">&gt;=</div>
<div class="c" style="left:365px;top:613px;width:87px;height:18px;text-align:right;padding-right:7px;font-size:14.3px;">30,000,000</div>
<div class="c" style="left:453px;top:613px;width:257px;height:18px;padding-left:2px;">Thu nhập ròng bình quân 1 tháng</div>
<div class="c" style="left:711px;top:613px;width:97px;height:18px;text-align:right;padding-right:7px;font-size:14.3px;">45,169,989</div>
<div class="c" style="left:809px;top:613px;width:96px;height:18px;text-align:right;padding-right:7px;font-size:14.3px;">65,119,923</div>
<div class="c" style="left:906px;top:613px;width:96px;height:18px;text-align:right;padding-right:7px;font-size:14.3px;">61,129,936</div>
<div class="c" style="left:1003px;top:613px;width:96px;height:18px;text-align:right;padding-right:7px;font-size:14.3px;">57,139,950</div>
<div class="c" style="left:1100px;top:613px;width:96px;height:18px;text-align:right;padding-right:7px;font-size:14.3px;">53,149,963</div>
<div class="c" style="left:1197px;top:613px;width:96px;height:18px;text-align:right;padding-right:7px;font-size:14.3px;">49,159,976</div>
<div class="c" style="left:1294px;top:613px;width:96px;height:18px;text-align:right;padding-right:7px;font-size:14.3px;">45,169,989</div>
<div class="c" style="left:1391px;top:613px;width:96px;height:18px;text-align:right;padding-right:7px;font-size:14.3px;">41,180,002</div>
<div class="c" style="left:1488px;top:613px;width:96px;height:18px;text-align:right;padding-right:7px;font-size:14.3px;">37,190,015</div>
<div class="c" style="left:1585px;top:613px;width:96px;height:18px;text-align:right;padding-right:7px;font-size:14.3px;">33,200,028</div>
<div class="c" style="left:1682px;top:613px;width:96px;height:18px;text-align:right;padding-right:7px;color:#9c0006;font-size:14.3px;">29,210,041</div>
<div class="c" style="left:1779px;top:613px;width:96px;height:18px;text-align:right;padding-right:7px;color:#9c0006;font-size:14.3px;">25,220,055</div>
<div class="c" style="left:297px;top:631px;width:67px;height:18px;text-align:right;padding-right:2px;">&gt;=</div>
<div class="c" style="left:365px;top:631px;width:87px;height:18px;text-align:right;padding-right:2px;font-size:14.3px;">12%</div>
<div class="c" style="left:453px;top:631px;width:257px;height:18px;padding-left:2px;">IRR</div>
<div class="c" style="left:711px;top:631px;width:97px;height:18px;text-align:right;padding-right:2px;font-size:14.3px;">68%</div>
<div class="c" style="left:809px;top:631px;width:96px;height:18px;text-align:right;padding-right:2px;font-size:14.3px;">167%</div>
<div class="c" style="left:906px;top:631px;width:96px;height:18px;text-align:right;padding-right:2px;font-size:14.3px;">139%</div>
<div class="c" style="left:1003px;top:631px;width:96px;height:18px;text-align:right;padding-right:2px;font-size:14.3px;">116%</div>
<div class="c" style="left:1100px;top:631px;width:96px;height:18px;text-align:right;padding-right:2px;font-size:14.3px;">98%</div>
<div class="c" style="left:1197px;top:631px;width:96px;height:18px;text-align:right;padding-right:2px;font-size:14.3px;">82%</div>
<div class="c" style="left:1294px;top:631px;width:96px;height:18px;text-align:right;padding-right:2px;font-size:14.3px;">68%</div>
<div class="c" style="left:1391px;top:631px;width:96px;height:18px;text-align:right;padding-right:2px;font-size:14.3px;">56%</div>
<div class="c" style="left:1488px;top:631px;width:96px;height:18px;text-align:right;padding-right:2px;font-size:14.3px;">46%</div>
<div class="c" style="left:1585px;top:631px;width:96px;height:18px;text-align:right;padding-right:2px;font-size:14.3px;">36%</div>
<div class="c" style="left:1682px;top:631px;width:96px;height:18px;text-align:right;padding-right:2px;font-size:14.3px;">26%</div>
<div class="c" style="left:1779px;top:631px;width:96px;height:18px;text-align:right;padding-right:2px;font-size:14.3px;">18%</div>
<div class="c" style="left:297px;top:649px;width:67px;height:18px;text-align:right;padding-right:2px;">&gt;=</div>
<div class="c" style="left:365px;top:649px;width:87px;height:18px;text-align:right;padding-right:2px;font-size:14.3px;">20%</div>
<div class="c" style="left:453px;top:649px;width:257px;height:18px;padding-left:2px;">ROE (Lợi nhuận BQ 1 năm/Vốn chủ sở hữu)</div>
<div class="c" style="left:711px;top:649px;width:97px;height:18px;text-align:right;padding-right:2px;font-size:14.3px;">93%</div>
<div class="c" style="left:809px;top:649px;width:96px;height:18px;text-align:right;padding-right:2px;font-size:14.3px;">176%</div>
<div class="c" style="left:906px;top:649px;width:96px;height:18px;text-align:right;padding-right:2px;font-size:14.3px;">156%</div>
<div class="c" style="left:1003px;top:649px;width:96px;height:18px;text-align:right;padding-right:2px;font-size:14.3px;">139%</div>
<div class="c" style="left:1100px;top:649px;width:96px;height:18px;text-align:right;padding-right:2px;font-size:14.3px;">122%</div>
<div class="c" style="left:1197px;top:649px;width:96px;height:18px;text-align:right;padding-right:2px;font-size:14.3px;">107%</div>
<div class="c" style="left:1294px;top:649px;width:96px;height:18px;text-align:right;padding-right:2px;font-size:14.3px;">93%</div>
<div class="c" style="left:1391px;top:649px;width:96px;height:18px;text-align:right;padding-right:2px;font-size:14.3px;">80%</div>
<div class="c" style="left:1488px;top:649px;width:96px;height:18px;text-align:right;padding-right:2px;font-size:14.3px;">67%</div>
<div class="c" style="left:1585px;top:649px;width:96px;height:18px;text-align:right;padding-right:2px;font-size:14.3px;">56%</div>
<div class="c" style="left:1682px;top:649px;width:96px;height:18px;text-align:right;padding-right:2px;font-size:14.3px;">45%</div>
<div class="c" style="left:1779px;top:649px;width:96px;height:18px;text-align:right;padding-right:2px;font-size:14.3px;">34%</div>
<div class="c" style="left:297px;top:667px;width:67px;height:18px;text-align:right;padding-right:2px;">&gt;=</div>
<div class="c" style="left:365px;top:667px;width:87px;height:18px;text-align:right;padding-right:2px;font-size:14.3px;">5%</div>
<div class="c" style="left:453px;top:667px;width:257px;height:18px;padding-left:2px;">ROI (Lợi nhuận BQ 1 năm/Tổng vốn đầu tư)</div>
<div class="c" style="left:711px;top:667px;width:97px;height:18px;text-align:right;padding-right:2px;font-size:14.3px;">55%</div>
<div class="c" style="left:809px;top:667px;width:96px;height:18px;text-align:right;padding-right:2px;font-size:14.3px;">105%</div>
<div class="c" style="left:906px;top:667px;width:96px;height:18px;text-align:right;padding-right:2px;font-size:14.3px;">93%</div>
<div class="c" style="left:1003px;top:667px;width:96px;height:18px;text-align:right;padding-right:2px;font-size:14.3px;">83%</div>
<div class="c" style="left:1100px;top:667px;width:96px;height:18px;text-align:right;padding-right:2px;font-size:14.3px;">73%</div>
<div class="c" style="left:1197px;top:667px;width:96px;height:18px;text-align:right;padding-right:2px;font-size:14.3px;">64%</div>
<div class="c" style="left:1294px;top:667px;width:96px;height:18px;text-align:right;padding-right:2px;font-size:14.3px;">55%</div>
<div class="c" style="left:1391px;top:667px;width:96px;height:18px;text-align:right;padding-right:2px;font-size:14.3px;">47%</div>
<div class="c" style="left:1488px;top:667px;width:96px;height:18px;text-align:right;padding-right:2px;font-size:14.3px;">40%</div>
<div class="c" style="left:1585px;top:667px;width:96px;height:18px;text-align:right;padding-right:2px;font-size:14.3px;">33%</div>
<div class="c" style="left:1682px;top:667px;width:96px;height:18px;text-align:right;padding-right:2px;font-size:14.3px;">27%</div>
<div class="c" style="left:1779px;top:667px;width:96px;height:18px;text-align:right;padding-right:2px;font-size:14.3px;">20%</div>
<div class="c" style="left:297px;top:685px;width:67px;height:18px;text-align:right;padding-right:2px;">&gt;=</div>
<div class="c" style="left:365px;top:685px;width:87px;height:18px;text-align:right;padding-right:2px;font-size:14.3px;">10%</div>
<div class="c" style="left:453px;top:685px;width:257px;height:18px;padding-left:2px;">ROS (Lợi nhuận BQ 1 năm/Doanh thu)</div>
<div class="c" style="left:711px;top:685px;width:97px;height:18px;text-align:right;padding-right:2px;font-size:14.3px;">13%</div>
<div class="c" style="left:809px;top:685px;width:96px;height:18px;text-align:right;padding-right:2px;font-size:14.3px;">20%</div>
<div class="c" style="left:906px;top:685px;width:96px;height:18px;text-align:right;padding-right:2px;font-size:14.3px;">19%</div>
<div class="c" style="left:1003px;top:685px;width:96px;height:18px;text-align:right;padding-right:2px;font-size:14.3px;">17%</div>
<div class="c" style="left:1100px;top:685px;width:96px;height:18px;text-align:right;padding-right:2px;font-size:14.3px;">16%</div>
<div class="c" style="left:1197px;top:685px;width:96px;height:18px;text-align:right;padding-right:2px;font-size:14.3px;">14%</div>
<div class="c" style="left:1294px;top:685px;width:96px;height:18px;text-align:right;padding-right:2px;font-size:14.3px;">13%</div>
<div class="c" style="left:1391px;top:685px;width:96px;height:18px;text-align:right;padding-right:2px;font-size:14.3px;">11%</div>
<div class="c" style="left:1488px;top:685px;width:96px;height:18px;text-align:right;padding-right:2px;color:#9c0006;font-size:14.3px;">10%</div>
<div class="c" style="left:1585px;top:685px;width:96px;height:18px;text-align:right;padding-right:2px;color:#9c0006;font-size:14.3px;">8%</div>
<div class="c" style="left:1682px;top:685px;width:96px;height:18px;text-align:right;padding-right:2px;color:#9c0006;font-size:14.3px;">7%</div>
<div class="c" style="left:1779px;top:685px;width:96px;height:18px;text-align:right;padding-right:2px;color:#9c0006;font-size:14.3px;">6%</div>
<div class="c" style="left:29px;top:721px;width:170px;height:18px;padding-left:2px;">Lương thời vụ công suất ổn định</div>
<div class="c" style="left:200px;top:721px;width:96px;height:18px;text-align:right;padding-right:7px;font-size:14.3px;">980,000</div>
<div class="c" style="left:297px;top:721px;width:67px;height:18px;text-align:right;padding-right:2px;font-size:14.3px;">0%</div>
<div class="c" style="left:365px;top:721px;width:87px;height:18px;text-align:right;padding-right:2px;font-size:14.3px;">10%</div>
<div class="c" style="left:809px;top:721px;width:96px;height:18px;text-align:right;padding-right:7px;font-size:14.3px;">490,000</div>
<div class="c" style="left:906px;top:721px;width:96px;height:18px;text-align:right;padding-right:7px;font-size:14.3px;">588,000</div>
<div class="c" style="left:1003px;top:721px;width:96px;height:18px;text-align:right;padding-right:7px;font-size:14.3px;">686,000</div>
<div class="c" style="left:1100px;top:721px;width:96px;height:18px;text-align:right;padding-right:7px;font-size:14.3px;">784,000</div>
<div class="c" style="left:1197px;top:721px;width:96px;height:18px;text-align:right;padding-right:7px;font-size:14.3px;">882,000</div>
<div class="c" style="left:1294px;top:721px;width:96px;height:18px;text-align:right;padding-right:7px;font-size:14.3px;">980,000</div>
<div class="c" style="left:1391px;top:721px;width:96px;height:18px;text-align:right;padding-right:7px;font-size:14.3px;">1,078,000</div>
<div class="c" style="left:1488px;top:721px;width:96px;height:18px;text-align:right;padding-right:7px;font-size:14.3px;">1,176,000</div>
<div class="c" style="left:1585px;top:721px;width:96px;height:18px;text-align:right;padding-right:7px;font-size:14.3px;">1,274,000</div>
<div class="c" style="left:1682px;top:721px;width:96px;height:18px;text-align:right;padding-right:7px;font-size:14.3px;">1,372,000</div>
<div class="c" style="left:1779px;top:721px;width:96px;height:18px;text-align:right;padding-right:7px;font-size:14.3px;">1,470,000</div>
<div class="c" style="left:809px;top:739px;width:96px;height:18px;text-align:right;padding-right:2px;font-size:14.3px;">-50%</div>
<div class="c" style="left:906px;top:739px;width:96px;height:18px;text-align:right;padding-right:2px;font-size:14.3px;">-40%</div>
<div class="c" style="left:1003px;top:739px;width:96px;height:18px;text-align:right;padding-right:2px;font-size:14.3px;">-30%</div>
<div class="c" style="left:1100px;top:739px;width:96px;height:18px;text-align:right;padding-right:2px;font-size:14.3px;">-20%</div>
<div class="c" style="left:1197px;top:739px;width:96px;height:18px;text-align:right;padding-right:2px;font-size:14.3px;">-10%</div>
<div class="c" style="left:1294px;top:739px;width:96px;height:18px;text-align:right;padding-right:2px;font-size:14.3px;">0%</div>
<div class="c" style="left:1391px;top:739px;width:96px;height:18px;text-align:right;padding-right:2px;font-size:14.3px;">10%</div>
<div class="c" style="left:1488px;top:739px;width:96px;height:18px;text-align:right;padding-right:2px;font-size:14.3px;">20%</div>
<div class="c" style="left:1585px;top:739px;width:96px;height:18px;text-align:right;padding-right:2px;font-size:14.3px;">30%</div>
<div class="c" style="left:1682px;top:739px;width:96px;height:18px;text-align:right;padding-right:2px;font-size:14.3px;">40%</div>
<div class="c" style="left:1779px;top:739px;width:96px;height:18px;text-align:right;padding-right:2px;font-size:14.3px;">50%</div>
<div class="c" style="left:200px;top:757px;width:96px;height:143px;line-height:141px;text-align:center;font-weight:bold;font-size:15px">Điều kiện</div>
<div class="c" style="left:297px;top:757px;width:67px;height:18px;text-align:right;padding-right:2px;">&gt;=</div>
<div class="c" style="left:365px;top:757px;width:87px;height:18px;text-align:right;padding-right:2px;font-size:14.3px;">36</div>
<div class="c" style="left:453px;top:757px;width:257px;height:18px;padding-left:2px;">Thời gian hoàn vốn</div>
<div class="c" style="left:711px;top:757px;width:97px;height:18px;text-align:right;padding-right:8px;color:#ff0000;font-weight:bold;font-size:14.3px;letter-spacing:-0.33px;">25.1</div>
<div class="c" style="left:809px;top:757px;width:96px;height:18px;text-align:right;padding-right:8px;color:#ff0000;font-weight:bold;font-size:14.3px;letter-spacing:-0.33px;">19.6</div>
<div class="c" style="left:906px;top:757px;width:96px;height:18px;text-align:right;padding-right:8px;color:#ff0000;font-weight:bold;font-size:14.3px;letter-spacing:-0.33px;">20.5</div>
<div class="c" style="left:1003px;top:757px;width:96px;height:18px;text-align:right;padding-right:8px;color:#ff0000;font-weight:bold;font-size:14.3px;letter-spacing:-0.33px;">21.5</div>
<div class="c" style="left:1100px;top:757px;width:96px;height:18px;text-align:right;padding-right:8px;color:#ff0000;font-weight:bold;font-size:14.3px;letter-spacing:-0.33px;">22.6</div>
<div class="c" style="left:1197px;top:757px;width:96px;height:18px;text-align:right;padding-right:8px;color:#ff0000;font-weight:bold;font-size:14.3px;letter-spacing:-0.33px;">23.8</div>
<div class="c" style="left:1294px;top:757px;width:96px;height:18px;text-align:right;padding-right:8px;color:#ff0000;font-weight:bold;font-size:14.3px;letter-spacing:-0.33px;">25.1</div>
<div class="c" style="left:1391px;top:757px;width:96px;height:18px;text-align:right;padding-right:8px;color:#ff0000;font-weight:bold;font-size:14.3px;letter-spacing:-0.33px;">26.7</div>
<div class="c" style="left:1488px;top:757px;width:96px;height:18px;text-align:right;padding-right:8px;color:#ff0000;font-weight:bold;font-size:14.3px;letter-spacing:-0.33px;">28.5</div>
<div class="c" style="left:1585px;top:757px;width:96px;height:18px;text-align:right;padding-right:8px;color:#ff0000;font-weight:bold;font-size:14.3px;letter-spacing:-0.33px;">30.6</div>
<div class="c" style="left:1682px;top:757px;width:96px;height:18px;text-align:right;padding-right:8px;color:#ff0000;font-weight:bold;font-size:14.3px;letter-spacing:-0.33px;">33.1</div>
<div class="c" style="left:1779px;top:757px;width:96px;height:18px;text-align:right;padding-right:8px;color:#9c0006;font-weight:bold;font-size:14.3px;letter-spacing:-0.33px;">36.2</div>
<div class="c" style="left:453px;top:775px;width:257px;height:18px;padding-left:2px;">Doanh thu hòa vốn/ 1 đơn vị thời gian</div>
<div class="c" style="left:711px;top:775px;width:97px;height:18px;text-align:right;padding-right:7px;font-size:14.3px;">5,070,739</div>
<div class="c" style="left:809px;top:775px;width:96px;height:18px;text-align:right;padding-right:7px;font-size:14.3px;">5,070,739</div>
<div class="c" style="left:906px;top:775px;width:96px;height:18px;text-align:right;padding-right:7px;font-size:14.3px;">5,070,739</div>
<div class="c" style="left:1003px;top:775px;width:96px;height:18px;text-align:right;padding-right:7px;font-size:14.3px;">5,070,739</div>
<div class="c" style="left:1100px;top:775px;width:96px;height:18px;text-align:right;padding-right:7px;font-size:14.3px;">5,070,739</div>
<div class="c" style="left:1197px;top:775px;width:96px;height:18px;text-align:right;padding-right:7px;font-size:14.3px;">5,070,739</div>
<div class="c" style="left:1294px;top:775px;width:96px;height:18px;text-align:right;padding-right:7px;font-size:14.3px;">5,070,739</div>
<div class="c" style="left:1391px;top:775px;width:96px;height:18px;text-align:right;padding-right:7px;font-size:14.3px;">5,070,739</div>
<div class="c" style="left:1488px;top:775px;width:96px;height:18px;text-align:right;padding-right:7px;font-size:14.3px;">5,070,739</div>
<div class="c" style="left:1585px;top:775px;width:96px;height:18px;text-align:right;padding-right:7px;font-size:14.3px;">5,070,739</div>
<div class="c" style="left:1682px;top:775px;width:96px;height:18px;text-align:right;padding-right:7px;font-size:14.3px;">5,070,739</div>
<div class="c" style="left:1779px;top:775px;width:96px;height:18px;text-align:right;padding-right:7px;font-size:14.3px;">5,070,739</div>
<div class="c" style="left:453px;top:793px;width:257px;height:18px;padding-left:2px;">Sản lượng hòa vốn/ 1 đơn vị thời gian</div>
<div class="c" style="left:711px;top:793px;width:97px;height:18px;text-align:right;padding-right:7px;font-size:14.3px;">72</div>
<div class="c" style="left:809px;top:793px;width:96px;height:18px;text-align:right;padding-right:7px;font-size:14.3px;">72</div>
<div class="c" style="left:906px;top:793px;width:96px;height:18px;text-align:right;padding-right:7px;font-size:14.3px;">72</div>
<div class="c" style="left:1003px;top:793px;width:96px;height:18px;text-align:right;padding-right:7px;font-size:14.3px;">72</div>
<div class="c" style="left:1100px;top:793px;width:96px;height:18px;text-align:right;padding-right:7px;font-size:14.3px;">72</div>
<div class="c" style="left:1197px;top:793px;width:96px;height:18px;text-align:right;padding-right:7px;font-size:14.3px;">72</div>
<div class="c" style="left:1294px;top:793px;width:96px;height:18px;text-align:right;padding-right:7px;font-size:14.3px;">72</div>
<div class="c" style="left:1391px;top:793px;width:96px;height:18px;text-align:right;padding-right:7px;font-size:14.3px;">72</div>
<div class="c" style="left:1488px;top:793px;width:96px;height:18px;text-align:right;padding-right:7px;font-size:14.3px;">72</div>
<div class="c" style="left:1585px;top:793px;width:96px;height:18px;text-align:right;padding-right:7px;font-size:14.3px;">72</div>
<div class="c" style="left:1682px;top:793px;width:96px;height:18px;text-align:right;padding-right:7px;font-size:14.3px;">72</div>
<div class="c" style="left:1779px;top:793px;width:96px;height:18px;text-align:right;padding-right:7px;font-size:14.3px;">72</div>
<div class="c" style="left:297px;top:811px;width:67px;height:18px;text-align:right;padding-right:2px;">&gt;=</div>
<div class="c" style="left:365px;top:811px;width:87px;height:18px;text-align:right;padding-right:7px;font-size:14.3px;">30,000,000</div>
<div class="c" style="left:453px;top:811px;width:257px;height:18px;padding-left:2px;">Thu nhập ròng bình quân 1 tháng</div>
<div class="c" style="left:711px;top:811px;width:97px;height:18px;text-align:right;padding-right:7px;font-size:14.3px;">45,169,989</div>
<div class="c" style="left:809px;top:811px;width:96px;height:18px;text-align:right;padding-right:7px;font-size:14.3px;">62,285,101</div>
<div class="c" style="left:906px;top:811px;width:96px;height:18px;text-align:right;padding-right:7px;font-size:14.3px;">58,862,079</div>
<div class="c" style="left:1003px;top:811px;width:96px;height:18px;text-align:right;padding-right:7px;font-size:14.3px;">55,439,056</div>
<div class="c" style="left:1100px;top:811px;width:96px;height:18px;text-align:right;padding-right:7px;font-size:14.3px;">52,016,034</div>
<div class="c" style="left:1197px;top:811px;width:96px;height:18px;text-align:right;padding-right:7px;font-size:14.3px;">48,593,011</div>
<div class="c" style="left:1294px;top:811px;width:96px;height:18px;text-align:right;padding-right:7px;font-size:14.3px;">45,169,989</div>
<div class="c" style="left:1391px;top:811px;width:96px;height:18px;text-align:right;padding-right:7px;font-size:14.3px;">41,746,967</div>
<div class="c" style="left:1488px;top:811px;width:96px;height:18px;text-align:right;padding-right:7px;font-size:14.3px;">38,323,944</div>
<div class="c" style="left:1585px;top:811px;width:96px;height:18px;text-align:right;padding-right:7px;font-size:14.3px;">34,900,922</div>
<div class="c" style="left:1682px;top:811px;width:96px;height:18px;text-align:right;padding-right:7px;font-size:14.3px;">31,477,899</div>
<div class="c" style="left:1779px;top:811px;width:96px;height:18px;text-align:right;padding-right:7px;color:#9c0006;font-size:14.3px;">28,054,877</div>
<div class="c" style="left:297px;top:829px;width:67px;height:18px;text-align:right;padding-right:2px;">&gt;=</div>
<div class="c" style="left:365px;top:829px;width:87px;height:18px;text-align:right;padding-right:2px;font-size:14.3px;">12%</div>
<div class="c" style="left:453px;top:829px;width:257px;height:18px;padding-left:2px;">IRR</div>
<div class="c" style="left:711px;top:829px;width:97px;height:18px;text-align:right;padding-right:2px;font-size:14.3px;">68%</div>
<div class="c" style="left:809px;top:829px;width:96px;height:18px;text-align:right;padding-right:2px;font-size:14.3px;">106%</div>
<div class="c" style="left:906px;top:829px;width:96px;height:18px;text-align:right;padding-right:2px;font-size:14.3px;">98%</div>
<div class="c" style="left:1003px;top:829px;width:96px;height:18px;text-align:right;padding-right:2px;font-size:14.3px;">91%</div>
<div class="c" style="left:1100px;top:829px;width:96px;height:18px;text-align:right;padding-right:2px;font-size:14.3px;">83%</div>
<div class="c" style="left:1197px;top:829px;width:96px;height:18px;text-align:right;padding-right:2px;font-size:14.3px;">76%</div>
<div class="c" style="left:1294px;top:829px;width:96px;height:18px;text-align:right;padding-right:2px;font-size:14.3px;">68%</div>
<div class="c" style="left:1391px;top:829px;width:96px;height:18px;text-align:right;padding-right:2px;font-size:14.3px;">61%</div>
<div class="c" style="left:1488px;top:829px;width:96px;height:18px;text-align:right;padding-right:2px;font-size:14.3px;">54%</div>
<div class="c" style="left:1585px;top:829px;width:96px;height:18px;text-align:right;padding-right:2px;font-size:14.3px;">47%</div>
<div class="c" style="left:1682px;top:829px;width:96px;height:18px;text-align:right;padding-right:2px;font-size:14.3px;">39%</div>
<div class="c" style="left:1779px;top:829px;width:96px;height:18px;text-align:right;padding-right:2px;font-size:14.3px;">32%</div>
<div class="c" style="left:297px;top:847px;width:67px;height:18px;text-align:right;padding-right:2px;">&gt;=</div>
<div class="c" style="left:365px;top:847px;width:87px;height:18px;text-align:right;padding-right:2px;font-size:14.3px;">20%</div>
<div class="c" style="left:453px;top:847px;width:257px;height:18px;padding-left:2px;">ROE (Lợi nhuận BQ 1 năm/Vốn chủ sở hữu)</div>
<div class="c" style="left:711px;top:847px;width:97px;height:18px;text-align:right;padding-right:2px;font-size:14.3px;">93%</div>
<div class="c" style="left:809px;top:847px;width:96px;height:18px;text-align:right;padding-right:2px;font-size:14.3px;">135%</div>
<div class="c" style="left:906px;top:847px;width:96px;height:18px;text-align:right;padding-right:2px;font-size:14.3px;">127%</div>
<div class="c" style="left:1003px;top:847px;width:96px;height:18px;text-align:right;padding-right:2px;font-size:14.3px;">118%</div>
<div class="c" style="left:1100px;top:847px;width:96px;height:18px;text-align:right;padding-right:2px;font-size:14.3px;">110%</div>
<div class="c" style="left:1197px;top:847px;width:96px;height:18px;text-align:right;padding-right:2px;font-size:14.3px;">101%</div>
<div class="c" style="left:1294px;top:847px;width:96px;height:18px;text-align:right;padding-right:2px;font-size:14.3px;">93%</div>
<div class="c" style="left:1391px;top:847px;width:96px;height:18px;text-align:right;padding-right:2px;font-size:14.3px;">84%</div>
<div class="c" style="left:1488px;top:847px;width:96px;height:18px;text-align:right;padding-right:2px;font-size:14.3px;">76%</div>
<div class="c" style="left:1585px;top:847px;width:96px;height:18px;text-align:right;padding-right:2px;font-size:14.3px;">67%</div>
<div class="c" style="left:1682px;top:847px;width:96px;height:18px;text-align:right;padding-right:2px;font-size:14.3px;">59%</div>
<div class="c" style="left:1779px;top:847px;width:96px;height:18px;text-align:right;padding-right:2px;font-size:14.3px;">50%</div>
<div class="c" style="left:297px;top:865px;width:67px;height:18px;text-align:right;padding-right:2px;">&gt;=</div>
<div class="c" style="left:365px;top:865px;width:87px;height:18px;text-align:right;padding-right:2px;font-size:14.3px;">5%</div>
<div class="c" style="left:453px;top:865px;width:257px;height:18px;padding-left:2px;">ROI (Lợi nhuận BQ 1 năm/Tổng vốn đầu tư)</div>
<div class="c" style="left:711px;top:865px;width:97px;height:18px;text-align:right;padding-right:2px;font-size:14.3px;">55%</div>
<div class="c" style="left:809px;top:865px;width:96px;height:18px;text-align:right;padding-right:2px;font-size:14.3px;">81%</div>
<div class="c" style="left:906px;top:865px;width:96px;height:18px;text-align:right;padding-right:2px;font-size:14.3px;">76%</div>
<div class="c" style="left:1003px;top:865px;width:96px;height:18px;text-align:right;padding-right:2px;font-size:14.3px;">71%</div>
<div class="c" style="left:1100px;top:865px;width:96px;height:18px;text-align:right;padding-right:2px;font-size:14.3px;">66%</div>
<div class="c" style="left:1197px;top:865px;width:96px;height:18px;text-align:right;padding-right:2px;font-size:14.3px;">60%</div>
<div class="c" style="left:1294px;top:865px;width:96px;height:18px;text-align:right;padding-right:2px;font-size:14.3px;">55%</div>
<div class="c" style="left:1391px;top:865px;width:96px;height:18px;text-align:right;padding-right:2px;font-size:14.3px;">50%</div>
<div class="c" style="left:1488px;top:865px;width:96px;height:18px;text-align:right;padding-right:2px;font-size:14.3px;">45%</div>
<div class="c" style="left:1585px;top:865px;width:96px;height:18px;text-align:right;padding-right:2px;font-size:14.3px;">40%</div>
<div class="c" style="left:1682px;top:865px;width:96px;height:18px;text-align:right;padding-right:2px;font-size:14.3px;">35%</div>
<div class="c" style="left:1779px;top:865px;width:96px;height:18px;text-align:right;padding-right:2px;font-size:14.3px;">30%</div>
<div class="c" style="left:297px;top:883px;width:67px;height:18px;text-align:right;padding-right:2px;">&gt;=</div>
<div class="c" style="left:365px;top:883px;width:87px;height:18px;text-align:right;padding-right:2px;font-size:14.3px;">10%</div>
<div class="c" style="left:453px;top:883px;width:257px;height:18px;padding-left:2px;">ROS (Lợi nhuận BQ 1 năm/Doanh thu)</div>
<div class="c" style="left:711px;top:883px;width:97px;height:18px;text-align:right;padding-right:2px;font-size:14.3px;">13%</div>
<div class="c" style="left:809px;top:883px;width:96px;height:18px;text-align:right;padding-right:2px;font-size:14.3px;">19%</div>
<div class="c" style="left:906px;top:883px;width:96px;height:18px;text-align:right;padding-right:2px;font-size:14.3px;">18%</div>
<div class="c" style="left:1003px;top:883px;width:96px;height:18px;text-align:right;padding-right:2px;font-size:14.3px;">16%</div>
<div class="c" style="left:1100px;top:883px;width:96px;height:18px;text-align:right;padding-right:2px;font-size:14.3px;">15%</div>
<div class="c" style="left:1197px;top:883px;width:96px;height:18px;text-align:right;padding-right:2px;font-size:14.3px;">14%</div>
<div class="c" style="left:1294px;top:883px;width:96px;height:18px;text-align:right;padding-right:2px;font-size:14.3px;">13%</div>
<div class="c" style="left:1391px;top:883px;width:96px;height:18px;text-align:right;padding-right:2px;font-size:14.3px;">12%</div>
<div class="c" style="left:1488px;top:883px;width:96px;height:18px;text-align:right;padding-right:2px;font-size:14.3px;">11%</div>
<div class="c" style="left:1585px;top:883px;width:96px;height:18px;text-align:right;padding-right:2px;color:#9c0006;font-size:14.3px;">9%</div>
<div class="c" style="left:1682px;top:883px;width:96px;height:18px;text-align:right;padding-right:2px;color:#9c0006;font-size:14.3px;">8%</div>
<div class="c" style="left:1779px;top:883px;width:96px;height:18px;text-align:right;padding-right:2px;color:#9c0006;font-size:14.3px;">7%</div>
<div class="c" style="left:29px;top:919px;width:170px;height:18px;padding-left:2px;">Tỷ trọng NVL/Doanh thu</div>
<div class="c" style="left:200px;top:919px;width:96px;height:18px;text-align:right;padding-right:2px;font-size:14.3px;">35%</div>
<div class="c" style="left:297px;top:919px;width:67px;height:18px;text-align:right;padding-right:2px;font-size:14.3px;">0%</div>
<div class="c" style="left:365px;top:919px;width:87px;height:18px;text-align:right;padding-right:2px;font-size:14.3px;">2%</div>
<div class="c" style="left:809px;top:919px;width:96px;height:18px;text-align:right;padding-right:2px;font-size:14.3px;">25%</div>
<div class="c" style="left:906px;top:919px;width:96px;height:18px;text-align:right;padding-right:2px;font-size:14.3px;">27%</div>
<div class="c" style="left:1003px;top:919px;width:96px;height:18px;text-align:right;padding-right:2px;font-size:14.3px;">29%</div>
<div class="c" style="left:1100px;top:919px;width:96px;height:18px;text-align:right;padding-right:2px;font-size:14.3px;">31%</div>
<div class="c" style="left:1197px;top:919px;width:96px;height:18px;text-align:right;padding-right:2px;font-size:14.3px;">33%</div>
<div class="c" style="left:1294px;top:919px;width:96px;height:18px;text-align:right;padding-right:2px;font-size:14.3px;">35%</div>
<div class="c" style="left:1391px;top:919px;width:96px;height:18px;text-align:right;padding-right:2px;font-size:14.3px;">37%</div>
<div class="c" style="left:1488px;top:919px;width:96px;height:18px;text-align:right;padding-right:2px;font-size:14.3px;">39%</div>
<div class="c" style="left:1585px;top:919px;width:96px;height:18px;text-align:right;padding-right:2px;font-size:14.3px;">41%</div>
<div class="c" style="left:1682px;top:919px;width:96px;height:18px;text-align:right;padding-right:2px;font-size:14.3px;">43%</div>
<div class="c" style="left:1779px;top:919px;width:96px;height:18px;text-align:right;padding-right:2px;font-size:14.3px;">45%</div>
<div class="c" style="left:809px;top:937px;width:96px;height:18px;text-align:right;padding-right:2px;font-size:14.3px;">-10%</div>
<div class="c" style="left:906px;top:937px;width:96px;height:18px;text-align:right;padding-right:2px;font-size:14.3px;">-8%</div>
<div class="c" style="left:1003px;top:937px;width:96px;height:18px;text-align:right;padding-right:2px;font-size:14.3px;">-6%</div>
<div class="c" style="left:1100px;top:937px;width:96px;height:18px;text-align:right;padding-right:2px;font-size:14.3px;">-4%</div>
<div class="c" style="left:1197px;top:937px;width:96px;height:18px;text-align:right;padding-right:2px;font-size:14.3px;">-2%</div>
<div class="c" style="left:1294px;top:937px;width:96px;height:18px;text-align:right;padding-right:2px;font-size:14.3px;">0%</div>
<div class="c" style="left:1391px;top:937px;width:96px;height:18px;text-align:right;padding-right:2px;font-size:14.3px;">2%</div>
<div class="c" style="left:1488px;top:937px;width:96px;height:18px;text-align:right;padding-right:2px;font-size:14.3px;">4%</div>
<div class="c" style="left:1585px;top:937px;width:96px;height:18px;text-align:right;padding-right:2px;font-size:14.3px;">6%</div>
<div class="c" style="left:1682px;top:937px;width:96px;height:18px;text-align:right;padding-right:2px;font-size:14.3px;">8%</div>
<div class="c" style="left:1779px;top:937px;width:96px;height:18px;text-align:right;padding-right:2px;font-size:14.3px;">10%</div>
<div style="left:0px;top:286px;width:1890px;height:1px;background:#9f9f9f;"></div>
<div style="left:28px;top:270px;width:1px;height:683px;background:#9f9f9f;"></div>
<div style="left:1003px;top:269px;width:97px;height:16px;background:#d2d2d2;"></div>
<div style="left:1002px;top:285px;width:99px;height:2px;background:#107c41;"></div>
<div style="left:0px;top:414px;width:27px;height:19px;background:#d2d2d2;"></div>
<div style="left:28px;top:270px;width:1px;height:16px;background:#b4b4b4;"></div>
<div style="left:199px;top:270px;width:1px;height:16px;background:#b4b4b4;"></div>
<div style="left:296px;top:270px;width:1px;height:16px;background:#b4b4b4;"></div>
<div style="left:364px;top:270px;width:1px;height:16px;background:#b4b4b4;"></div>
<div style="left:452px;top:270px;width:1px;height:16px;background:#b4b4b4;"></div>
<div style="left:710px;top:270px;width:1px;height:16px;background:#b4b4b4;"></div>
<div style="left:808px;top:270px;width:1px;height:16px;background:#b4b4b4;"></div>
<div style="left:905px;top:270px;width:1px;height:16px;background:#b4b4b4;"></div>
<div style="left:1002px;top:270px;width:1px;height:16px;background:#b4b4b4;"></div>
<div style="left:1099px;top:270px;width:1px;height:16px;background:#b4b4b4;"></div>
<div style="left:1196px;top:270px;width:1px;height:16px;background:#b4b4b4;"></div>
<div style="left:1293px;top:270px;width:1px;height:16px;background:#b4b4b4;"></div>
<div style="left:1390px;top:270px;width:1px;height:16px;background:#b4b4b4;"></div>
<div style="left:1487px;top:270px;width:1px;height:16px;background:#b4b4b4;"></div>
<div style="left:1584px;top:270px;width:1px;height:16px;background:#b4b4b4;"></div>
<div style="left:1681px;top:270px;width:1px;height:16px;background:#b4b4b4;"></div>
<div style="left:1778px;top:270px;width:1px;height:16px;background:#b4b4b4;"></div>
<div style="left:1875px;top:270px;width:1px;height:16px;background:#b4b4b4;"></div>
<div class="c h" style="left:29px;top:269px;width:170px;height:17px;line-height:18px;text-align:center;color:#262626">A</div>
<div class="c h" style="left:200px;top:269px;width:96px;height:17px;line-height:18px;text-align:center;color:#262626">B</div>
<div class="c h" style="left:297px;top:269px;width:67px;height:17px;line-height:18px;text-align:center;color:#262626">C</div>
<div class="c h" style="left:365px;top:269px;width:87px;height:17px;line-height:18px;text-align:center;color:#262626">D</div>
<div class="c h" style="left:453px;top:269px;width:257px;height:17px;line-height:18px;text-align:center;color:#262626">E</div>
<div class="c h" style="left:711px;top:269px;width:97px;height:17px;line-height:18px;text-align:center;color:#262626">F</div>
<div class="c h" style="left:809px;top:269px;width:96px;height:17px;line-height:18px;text-align:center;color:#262626">G</div>
<div class="c h" style="left:906px;top:269px;width:96px;height:17px;line-height:18px;text-align:center;color:#262626">H</div>
<div class="c h" style="left:1003px;top:269px;width:96px;height:17px;line-height:18px;text-align:center;color:#0f5c33">I</div>
<div class="c h" style="left:1100px;top:269px;width:96px;height:17px;line-height:18px;text-align:center;color:#262626">J</div>
<div class="c h" style="left:1197px;top:269px;width:96px;height:17px;line-height:18px;text-align:center;color:#262626">K</div>
<div class="c h" style="left:1294px;top:269px;width:96px;height:17px;line-height:18px;text-align:center;color:#262626">L</div>
<div class="c h" style="left:1391px;top:269px;width:96px;height:17px;line-height:18px;text-align:center;color:#262626">M</div>
<div class="c h" style="left:1488px;top:269px;width:96px;height:17px;line-height:18px;text-align:center;color:#262626">N</div>
<div class="c h" style="left:1585px;top:269px;width:96px;height:17px;line-height:18px;text-align:center;color:#262626">O</div>
<div class="c h" style="left:1682px;top:269px;width:96px;height:17px;line-height:18px;text-align:center;color:#262626">P</div>
<div class="c h" style="left:1779px;top:269px;width:96px;height:17px;line-height:18px;text-align:center;color:#262626">Q</div>
<svg style="left:15px;top:273px" width="11" height="11" viewBox="0 0 11 11"><path d="M10.5 0.5v10H0.5z" fill="#b8b8b8"/></svg>
<div style="left:0px;top:324px;width:28px;height:1px;background:#c4c4c4;"></div>
<div class="c h" style="left:0;top:306px;width:28px;height:18px;text-align:center;color:#262626">1</div>
<div style="left:0px;top:342px;width:28px;height:1px;background:#c4c4c4;"></div>
<div class="c h" style="left:0;top:325px;width:28px;height:18px;text-align:center;color:#262626">2</div>
<div style="left:0px;top:360px;width:28px;height:1px;background:#c4c4c4;"></div>
<div class="c h" style="left:0;top:343px;width:28px;height:18px;text-align:center;color:#262626">3</div>
<div style="left:0px;top:378px;width:28px;height:1px;background:#c4c4c4;"></div>
<div class="c h" style="left:0;top:361px;width:28px;height:18px;text-align:center;color:#262626">4</div>
<div style="left:0px;top:396px;width:28px;height:1px;background:#c4c4c4;"></div>
<div class="c h" style="left:0;top:379px;width:28px;height:18px;text-align:center;color:#262626">5</div>
<div style="left:0px;top:414px;width:28px;height:1px;background:#c4c4c4;"></div>
<div class="c h" style="left:0;top:397px;width:28px;height:18px;text-align:center;color:#262626">6</div>
<div style="left:0px;top:432px;width:28px;height:1px;background:#c4c4c4;"></div>
<div class="c h" style="left:0;top:415px;width:28px;height:18px;text-align:center;color:#0f5c33">7</div>
<div style="left:0px;top:450px;width:28px;height:1px;background:#c4c4c4;"></div>
<div class="c h" style="left:0;top:433px;width:28px;height:18px;text-align:center;color:#262626">8</div>
<div style="left:0px;top:468px;width:28px;height:1px;background:#c4c4c4;"></div>
<div class="c h" style="left:0;top:451px;width:28px;height:18px;text-align:center;color:#262626">9</div>
<div style="left:0px;top:486px;width:28px;height:1px;background:#c4c4c4;"></div>
<div class="c h" style="left:0;top:469px;width:28px;height:18px;text-align:center;color:#262626">10</div>
<div style="left:0px;top:504px;width:28px;height:1px;background:#c4c4c4;"></div>
<div class="c h" style="left:0;top:487px;width:28px;height:18px;text-align:center;color:#262626">11</div>
<div style="left:0px;top:522px;width:28px;height:1px;background:#c4c4c4;"></div>
<div class="c h" style="left:0;top:505px;width:28px;height:18px;text-align:center;color:#262626">12</div>
<div style="left:0px;top:540px;width:28px;height:1px;background:#c4c4c4;"></div>
<div class="c h" style="left:0;top:523px;width:28px;height:18px;text-align:center;color:#262626">13</div>
<div style="left:0px;top:558px;width:28px;height:1px;background:#c4c4c4;"></div>
<div class="c h" style="left:0;top:541px;width:28px;height:18px;text-align:center;color:#262626">14</div>
<div style="left:0px;top:576px;width:28px;height:1px;background:#c4c4c4;"></div>
<div class="c h" style="left:0;top:559px;width:28px;height:18px;text-align:center;color:#262626">15</div>
<div style="left:0px;top:594px;width:28px;height:1px;background:#c4c4c4;"></div>
<div class="c h" style="left:0;top:577px;width:28px;height:18px;text-align:center;color:#262626">16</div>
<div style="left:0px;top:612px;width:28px;height:1px;background:#c4c4c4;"></div>
<div class="c h" style="left:0;top:595px;width:28px;height:18px;text-align:center;color:#262626">17</div>
<div style="left:0px;top:630px;width:28px;height:1px;background:#c4c4c4;"></div>
<div class="c h" style="left:0;top:613px;width:28px;height:18px;text-align:center;color:#262626">18</div>
<div style="left:0px;top:648px;width:28px;height:1px;background:#c4c4c4;"></div>
<div class="c h" style="left:0;top:631px;width:28px;height:18px;text-align:center;color:#262626">19</div>
<div style="left:0px;top:666px;width:28px;height:1px;background:#c4c4c4;"></div>
<div class="c h" style="left:0;top:649px;width:28px;height:18px;text-align:center;color:#262626">20</div>
<div style="left:0px;top:684px;width:28px;height:1px;background:#c4c4c4;"></div>
<div class="c h" style="left:0;top:667px;width:28px;height:18px;text-align:center;color:#262626">21</div>
<div style="left:0px;top:702px;width:28px;height:1px;background:#c4c4c4;"></div>
<div class="c h" style="left:0;top:685px;width:28px;height:18px;text-align:center;color:#262626">22</div>
<div style="left:0px;top:720px;width:28px;height:1px;background:#c4c4c4;"></div>
<div class="c h" style="left:0;top:703px;width:28px;height:18px;text-align:center;color:#262626">23</div>
<div style="left:0px;top:738px;width:28px;height:1px;background:#c4c4c4;"></div>
<div class="c h" style="left:0;top:721px;width:28px;height:18px;text-align:center;color:#262626">24</div>
<div style="left:0px;top:756px;width:28px;height:1px;background:#c4c4c4;"></div>
<div class="c h" style="left:0;top:739px;width:28px;height:18px;text-align:center;color:#262626">25</div>
<div style="left:0px;top:774px;width:28px;height:1px;background:#c4c4c4;"></div>
<div class="c h" style="left:0;top:757px;width:28px;height:18px;text-align:center;color:#262626">26</div>
<div style="left:0px;top:792px;width:28px;height:1px;background:#c4c4c4;"></div>
<div class="c h" style="left:0;top:775px;width:28px;height:18px;text-align:center;color:#262626">27</div>
<div style="left:0px;top:810px;width:28px;height:1px;background:#c4c4c4;"></div>
<div class="c h" style="left:0;top:793px;width:28px;height:18px;text-align:center;color:#262626">28</div>
<div style="left:0px;top:828px;width:28px;height:1px;background:#c4c4c4;"></div>
<div class="c h" style="left:0;top:811px;width:28px;height:18px;text-align:center;color:#262626">29</div>
<div style="left:0px;top:846px;width:28px;height:1px;background:#c4c4c4;"></div>
<div class="c h" style="left:0;top:829px;width:28px;height:18px;text-align:center;color:#262626">30</div>
<div style="left:0px;top:864px;width:28px;height:1px;background:#c4c4c4;"></div>
<div class="c h" style="left:0;top:847px;width:28px;height:18px;text-align:center;color:#262626">31</div>
<div style="left:0px;top:882px;width:28px;height:1px;background:#c4c4c4;"></div>
<div class="c h" style="left:0;top:865px;width:28px;height:18px;text-align:center;color:#262626">32</div>
<div style="left:0px;top:900px;width:28px;height:1px;background:#c4c4c4;"></div>
<div class="c h" style="left:0;top:883px;width:28px;height:18px;text-align:center;color:#262626">33</div>
<div style="left:0px;top:918px;width:28px;height:1px;background:#c4c4c4;"></div>
<div class="c h" style="left:0;top:901px;width:28px;height:18px;text-align:center;color:#262626">34</div>
<div style="left:0px;top:936px;width:28px;height:1px;background:#c4c4c4;"></div>
<div class="c h" style="left:0;top:919px;width:28px;height:18px;text-align:center;color:#262626">35</div>
<div class="c h" style="left:0;top:937px;width:28px;height:16px;text-align:center;color:#262626">36</div>
<div style="left:27px;top:414px;width:2px;height:19px;background:#107c41;"></div>
<div style="left:1001px;top:413px;width:96px;height:17px;border:2px solid #217346"></div>
<div style="left:1096px;top:429px;width:5px;height:5px;background:#217346;border:1px solid #fff"></div>
<div style="left:1889px;top:286px;width:1px;height:668px;background:#9f9f9f;"></div>
<div style="left:0px;top:953px;width:1890px;height:1px;background:#a6a6a6;"></div>
<div style="left:1890px;top:269px;width:30px;height:685px;background:#e6e6e6;"></div>
<div style="left:1890px;top:287px;width:2px;height:666px;background:#efefef;"></div>
<div style="left:1892px;top:270px;width:23px;height:23px;background:#fff;border:1px solid #9d9d9d"></div>
<svg style="left:1899px;top:279px" width="11" height="6" viewBox="0 0 11 6"><path d="M0 6L5.5 0 11 6z" fill="#222"/></svg>
<div style="left:1892px;top:295px;width:23px;height:512px;background:#fff;border:1px solid #9d9d9d"></div>
<div style="left:1892px;top:929px;width:23px;height:23px;background:#fff;border:1px solid #9d9d9d"></div>
<svg style="left:1899px;top:938px" width="11" height="6" viewBox="0 0 11 6"><path d="M0 0L5.5 6 11 0z" fill="#222"/></svg>
<div style="left:0px;top:954px;width:1920px;height:33px;background:#e6e6e6;"></div>
<div style="left:0px;top:987px;width:1920px;height:1px;background:#cfcfcf;"></div>
<svg style="left:28px;top:963px" width="8" height="13" viewBox="0 0 8 13"><path d="M7.5 0v13L0.5 6.5z" fill="#c6c6c6"/></svg>
<svg style="left:63px;top:963px" width="8" height="13" viewBox="0 0 8 13"><path d="M0.5 0v13L7.5 6.5z" fill="#c6c6c6"/></svg>
<div style="left:118px;top:957px;width:1px;height:26px;background:#ababab;"></div>
<div style="left:279px;top:957px;width:1px;height:26px;background:#ababab;"></div>
<div style="left:461px;top:957px;width:1px;height:26px;background:#ababab;"></div>
<div style="left:684px;top:957px;width:1px;height:26px;background:#ababab;"></div>
<div style="left:802px;top:957px;width:1px;height:26px;background:#ababab;"></div>
<div style="left:980px;top:953px;width:178px;height:29px;background:#fff;"></div>
<div style="left:980px;top:953px;width:1px;height:29px;background:#c6c6c6;"></div>
<div style="left:1157px;top:953px;width:1px;height:29px;background:#c6c6c6;"></div>
<div style="left:980px;top:982px;width:178px;height:2px;background:#217346;"></div>
<div class="t " style="left:134.20px;top:958.37px;font-size:20px;line-height:20px;color:#444;transform:scaleX(0.9731);">Tóm tắt KQKD</div>
<div class="t " style="left:296.50px;top:958.37px;font-size:20px;line-height:20px;color:#444;transform:scaleX(0.9891);">Tổng vốn đầu tư</div>
<div class="t " style="left:479.20px;top:958.37px;font-size:20px;line-height:20px;color:#444;transform:scaleX(0.9855);">Thông số kinh doanh</div>
<div class="t " style="left:698.50px;top:958.37px;font-size:20px;line-height:20px;color:#444;transform:scaleX(1.0140);">Dòng tiền</div>
<div class="t " style="left:819.90px;top:958.37px;font-size:20px;line-height:20px;color:#444;transform:scaleX(0.9744);">Độ nhạy 2 chiều</div>
<div class="t " style="left:991.50px;top:958.37px;font-size:20px;line-height:20px;color:#1e6e42;font-weight:bold;transform:scaleX(1.0052);">Độ nhạy 1 chiều</div>
<svg style="left:1196px;top:958px" width="24" height="24" viewBox="1196 958 24 24" fill="none" stroke="#777" stroke-width="1.2"><circle cx="1207.750" cy="969.750" r="10"/><path d="M1207.750 965v9.5M1203 969.750h9.5" stroke="#666" stroke-width="1.5"/></svg>
<div style="left:1352px;top:962px;width:3px;height:3px;background:#b2b2b2;"></div>
<div style="left:1352px;top:968px;width:3px;height:3px;background:#b2b2b2;"></div>
<div style="left:1352px;top:974px;width:3px;height:3px;background:#b2b2b2;"></div>
<div style="left:1397px;top:958px;width:466px;height:24px;background:#f0f0f0;"></div>
<div style="left:1372px;top:958px;width:23px;height:22px;background:#fff;border:1px solid #9d9d9d"></div>
<svg style="left:1381px;top:964px" width="6" height="11" viewBox="0 0 6 11"><path d="M6 0v11L0 5.5z" fill="#222"/></svg>
<div style="left:1396px;top:958px;width:447px;height:22px;background:#fff;border:1px solid #9d9d9d"></div>
<div style="left:1863px;top:958px;width:23px;height:22px;background:#fff;border:1px solid #9d9d9d"></div>
<svg style="left:1873px;top:964px" width="6" height="11" viewBox="0 0 6 11"><path d="M0 0v11L6 5.5z" fill="#222"/></svg>
<div style="left:0px;top:988px;width:1920px;height:27px;background:#f3f2f1;"></div>
<div class="t " style="left:9.80px;top:996.36px;font-size:15.4px;line-height:15.4px;color:#444;transform:scaleX(0.9504);">Ready</div>
<svg style="left:80px;top:992px" width="24" height="23" viewBox="80 992 24 23" fill="none" stroke="#444" stroke-width="1.350" stroke-linecap="round" stroke-linejoin="round"><circle cx="90.3" cy="997" r="2.750"/><path d="M87.8 999.3L83.8 997.3c-1.3-.5-2.3 1.9-.9 2.6l4 2.1c.3 3.3-.9 6.6-1.9 9.5-.7 1.9 1.8 2.9 2.5 1.2l2.8-5.2 1.2 2.5"/><path d="M92.8 999.3l4-2c1.3-.5 2.3 1.9.9 2.6l-3.6 1.9v.9"/><path d="M92.3 1004.5l9.8 9.2M101.9 1004.3l-9.7 9.3" stroke-width="1.250"/></svg>
<div class="t " style="left:107.70px;top:996.36px;font-size:15.4px;line-height:15.4px;color:#444;transform:scaleX(0.9834);">Accessibility:</div>
<div class="t " style="left:198.90px;top:996.36px;font-size:15.4px;line-height:15.4px;color:#444;">Investigate</div>
<div style="left:1475px;top:988px;width:60px;height:27px;background:#cfcecd;"></div>
<svg style="left:1493px;top:992px" width="23" height="22" viewBox="1493 992 23 22" fill="none" stroke="#444" stroke-width="1.6"><rect x="1495.2" y="994.2" width="17.9" height="17.8"/><path d="M1501.2 994.2v17.8M1507.1 994.2v17.8M1495.2 1000.1h17.9M1495.2 1006.1h17.9"/></svg>
<svg style="left:1553px;top:992px" width="24" height="22" viewBox="1553 992 24 22" fill="none" stroke="#444" stroke-width="1.6"><rect x="1555.3" y="994.2" width="19.3" height="17.8"/><rect x="1559.9" y="997.3" width="10.3" height="11.7" stroke-width="1.4"/><path d="M1562.2 1000.2h5.8M1562.2 1003.2h5.8M1562.2 1006.1h5.8" stroke-width="1.3"/></svg>
<svg style="left:1613px;top:992px" width="24" height="22" viewBox="1613 992 24 22" fill="none" stroke="#444" stroke-width="1.6"><rect x="1615.2" y="994.2" width="19.3" height="17.8"/><path d="M1615.2 1005.4h12.4v-11.2M1621.3 994.2v11.2" stroke-width="1.5"/></svg>
<div style="left:1663px;top:1003px;width:12px;height:1px;background:#555;"></div>
<div style="left:1683px;top:1003px;width:148px;height:2px;background:#3c3c3c;"></div>
<div style="left:1756px;top:1000px;width:2px;height:8px;background:#3c3c3c;"></div>
<div style="left:1726px;top:995px;width:8px;height:17px;background:#3a3a3a;"></div>
<div style="left:1839px;top:1003px;width:12px;height:1px;background:#555;"></div>
<div style="left:1844px;top:998px;width:1px;height:12px;background:#555;"></div>
<div class="t " style="left:1868.90px;top:996.96px;font-size:15.4px;line-height:15.4px;color:#555;">65%</div>
</div></body></html>
